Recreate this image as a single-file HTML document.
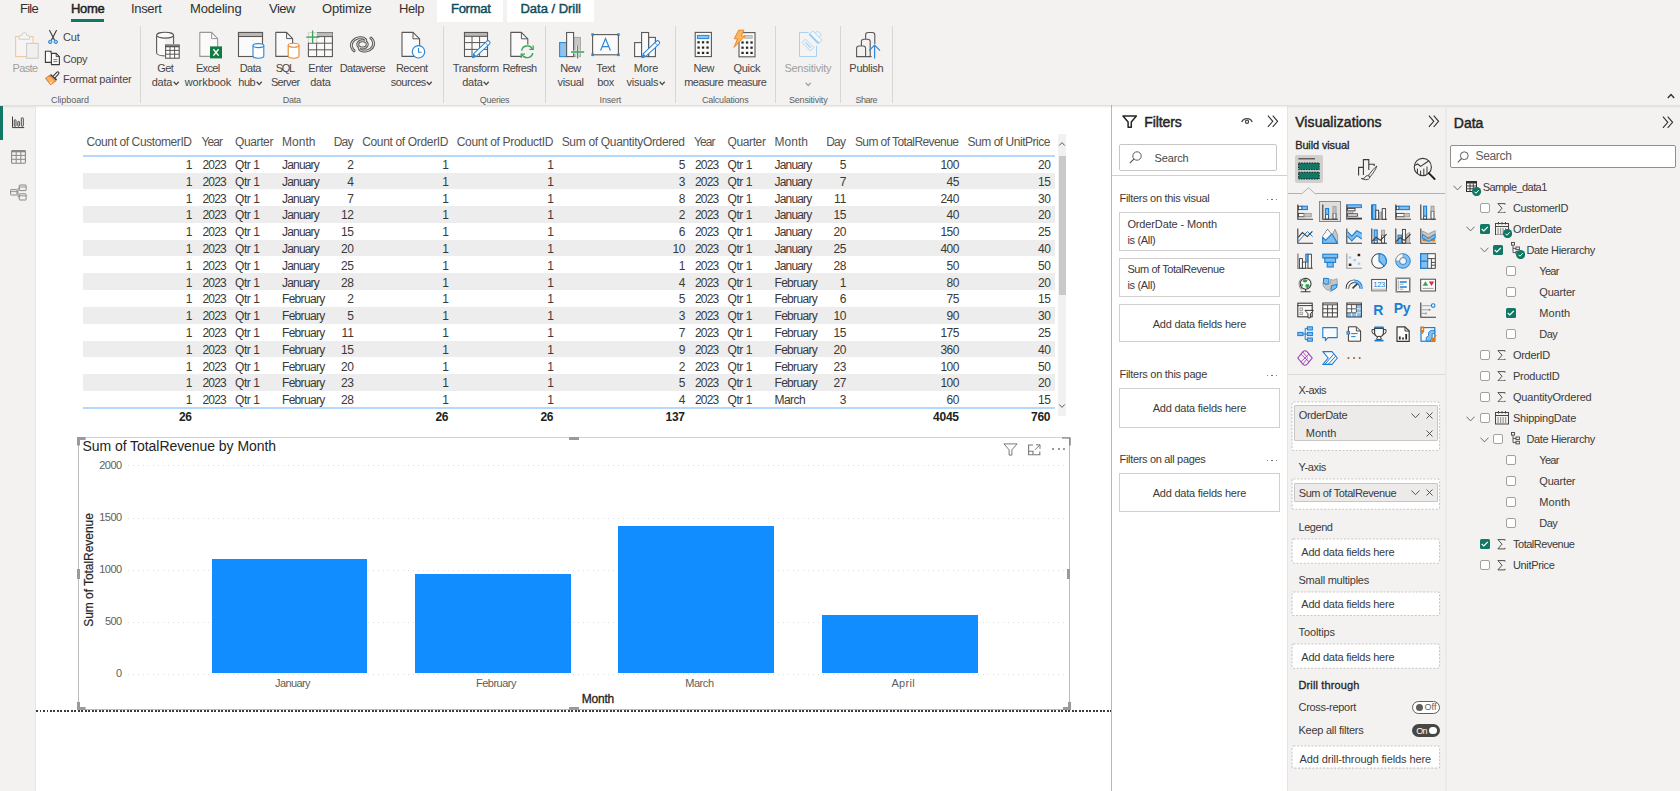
<!DOCTYPE html>
<html><head><meta charset="utf-8"><title>Power BI Desktop</title>
<style>
html,body{margin:0;padding:0}
body{width:1680px;height:791px;overflow:hidden;position:relative;background:#fff;font-family:"Liberation Sans", sans-serif;}
body>div,body>span,body>svg{position:absolute;display:block}
body>span{white-space:pre;line-height:1.149;}
</style></head><body>
<div style="left:0px;top:0px;width:1680px;height:105px;background:#f3f2f1;"></div>
<div style="left:0px;top:106px;width:35.4px;height:685px;background:#f3f2f1;"></div>
<div style="left:35px;top:106.6px;width:1px;height:685px;background:#e7e5e3;"></div>
<div style="left:0px;top:106px;width:3px;height:34px;background:#117865;"></div>
<div style="left:437px;top:0px;width:66px;height:22px;background:#fff;"></div>
<div style="left:507px;top:0px;width:87px;height:22px;background:#fff;"></div>
<span style="left:20.00px;top:1.89px;font-size:13px;color:#323130;letter-spacing:-0.738px;">File</span>
<span style="left:71.00px;top:1.89px;font-size:13px;color:#201f1e;-webkit-text-stroke:0.45px;letter-spacing:-0.297px;">Home</span>
<div style="left:71px;top:19px;width:33px;height:3px;background:#117865;"></div>
<span style="left:131.00px;top:1.89px;font-size:13px;color:#323130;letter-spacing:-0.336px;">Insert</span>
<span style="left:190.00px;top:1.89px;font-size:13px;color:#323130;letter-spacing:-0.158px;">Modeling</span>
<span style="left:269.00px;top:1.89px;font-size:13px;color:#323130;letter-spacing:-0.488px;">View</span>
<span style="left:322.00px;top:1.89px;font-size:13px;color:#323130;letter-spacing:-0.225px;">Optimize</span>
<span style="left:399.00px;top:1.89px;font-size:13px;color:#323130;letter-spacing:-0.438px;">Help</span>
<span style="left:451.00px;top:1.89px;font-size:13px;color:#0f4c5c;-webkit-text-stroke:0.45px;letter-spacing:-0.279px;">Format</span>
<span style="left:520.50px;top:1.89px;font-size:13px;color:#0f4c5c;-webkit-text-stroke:0.45px;letter-spacing:-0.016px;">Data / Drill</span>
<div style="left:140px;top:26px;width:1px;height:77px;background:#d8d6d4;"></div>
<div style="left:443px;top:26px;width:1px;height:77px;background:#d8d6d4;"></div>
<div style="left:545px;top:26px;width:1px;height:77px;background:#d8d6d4;"></div>
<div style="left:675px;top:26px;width:1px;height:77px;background:#d8d6d4;"></div>
<div style="left:775px;top:26px;width:1px;height:77px;background:#d8d6d4;"></div>
<div style="left:840px;top:26px;width:1px;height:77px;background:#d8d6d4;"></div>
<div style="left:892px;top:26px;width:1px;height:77px;background:#d8d6d4;"></div>
<svg style="left:1667px;top:93px;" width="8" height="6" viewBox="0 0 8 6" fill="none"><path d="M0.8 5 L4 1.6 L7.2 5" stroke="#323130" stroke-width="1.4"/></svg>
<span style="left:12.50px;top:62.18px;font-size:11px;color:#a19f9d;letter-spacing:-0.628px;">Paste</span>
<span style="left:63.00px;top:31.48px;font-size:11px;color:#484644;letter-spacing:-0.208px;">Cut</span>
<span style="left:63.00px;top:52.68px;font-size:11px;color:#484644;letter-spacing:-0.422px;">Copy</span>
<span style="left:63.00px;top:73.38px;font-size:11px;color:#484644;letter-spacing:-0.217px;">Format painter</span>
<span style="left:50.97px;top:94.78px;font-size:9px;color:#605e5c;letter-spacing:-0.059px;">Clipboard</span>
<span style="left:157.21px;top:62.38px;font-size:11px;color:#484644;letter-spacing:-0.578px;">Get</span>
<span style="left:151.63px;top:76.38px;font-size:11px;color:#484644;letter-spacing:-0.230px;">data</span>
<svg style="left:172.65px;top:81.3px;" width="7" height="5" viewBox="0 0 7 5" fill="none"><path d="M0.7 0.8 L3.2 3.6 L5.7 0.8" stroke="#484644" stroke-width="1.3"/></svg>
<span style="left:195.91px;top:62.38px;font-size:11px;color:#484644;letter-spacing:-0.681px;">Excel</span>
<span style="left:184.71px;top:76.38px;font-size:11px;color:#484644;letter-spacing:-0.072px;">workbook</span>
<span style="left:239.72px;top:62.38px;font-size:11px;color:#484644;letter-spacing:-0.562px;">Data</span>
<span style="left:238.27px;top:76.38px;font-size:11px;color:#484644;letter-spacing:-0.453px;">hub</span>
<svg style="left:255.9px;top:81.3px;" width="7" height="5" viewBox="0 0 7 5" fill="none"><path d="M0.7 0.8 L3.2 3.6 L5.7 0.8" stroke="#484644" stroke-width="1.3"/></svg>
<span style="left:275.83px;top:62.38px;font-size:11px;color:#484644;letter-spacing:-1.339px;">SQL</span>
<span style="left:270.92px;top:76.38px;font-size:11px;color:#484644;letter-spacing:-0.651px;">Server</span>
<span style="left:308.27px;top:62.38px;font-size:11px;color:#484644;letter-spacing:-0.459px;">Enter</span>
<span style="left:310.13px;top:76.38px;font-size:11px;color:#484644;letter-spacing:-0.230px;">data</span>
<span style="left:339.69px;top:62.38px;font-size:11px;color:#484644;letter-spacing:-0.516px;">Dataverse</span>
<span style="left:395.97px;top:62.38px;font-size:11px;color:#484644;letter-spacing:-0.560px;">Recent</span>
<span style="left:390.75px;top:76.38px;font-size:11px;color:#484644;letter-spacing:-0.504px;">sources</span>
<svg style="left:426.4px;top:81.3px;" width="7" height="5" viewBox="0 0 7 5" fill="none"><path d="M0.7 0.8 L3.2 3.6 L5.7 0.8" stroke="#484644" stroke-width="1.3"/></svg>
<span style="left:282.87px;top:94.78px;font-size:9px;color:#605e5c;letter-spacing:-0.254px;">Data</span>
<span style="left:452.79px;top:62.38px;font-size:11px;color:#484644;letter-spacing:-0.413px;">Transform</span>
<span style="left:462.13px;top:76.38px;font-size:11px;color:#484644;letter-spacing:-0.230px;">data</span>
<svg style="left:483.15px;top:81.3px;" width="7" height="5" viewBox="0 0 7 5" fill="none"><path d="M0.7 0.8 L3.2 3.6 L5.7 0.8" stroke="#484644" stroke-width="1.3"/></svg>
<span style="left:502.48px;top:62.38px;font-size:11px;color:#484644;letter-spacing:-0.647px;">Refresh</span>
<span style="left:479.81px;top:94.78px;font-size:9px;color:#605e5c;letter-spacing:-0.288px;">Queries</span>
<span style="left:560.30px;top:62.38px;font-size:11px;color:#484644;letter-spacing:-0.505px;">New</span>
<span style="left:557.62px;top:76.38px;font-size:11px;color:#484644;letter-spacing:-0.354px;">visual</span>
<span style="left:596.34px;top:62.38px;font-size:11px;color:#484644;letter-spacing:-0.422px;">Text</span>
<span style="left:597.34px;top:76.38px;font-size:11px;color:#484644;letter-spacing:-0.417px;">box</span>
<span style="left:633.68px;top:62.38px;font-size:11px;color:#484644;letter-spacing:-0.141px;">More</span>
<span style="left:626.60px;top:76.38px;font-size:11px;color:#484644;letter-spacing:-0.304px;">visuals</span>
<svg style="left:658.65px;top:81.3px;" width="7" height="5" viewBox="0 0 7 5" fill="none"><path d="M0.7 0.8 L3.2 3.6 L5.7 0.8" stroke="#484644" stroke-width="1.3"/></svg>
<span style="left:599.57px;top:94.78px;font-size:9px;color:#605e5c;letter-spacing:-0.169px;">Insert</span>
<span style="left:693.50px;top:62.38px;font-size:11px;color:#484644;letter-spacing:-0.505px;">New</span>
<span style="left:684.23px;top:76.38px;font-size:11px;color:#484644;letter-spacing:-0.542px;">measure</span>
<span style="left:733.39px;top:62.38px;font-size:11px;color:#484644;letter-spacing:-0.225px;">Quick</span>
<span style="left:727.23px;top:76.38px;font-size:11px;color:#484644;letter-spacing:-0.542px;">measure</span>
<span style="left:701.94px;top:94.78px;font-size:9px;color:#605e5c;letter-spacing:-0.211px;">Calculations</span>
<span style="left:784.38px;top:62.38px;font-size:11px;color:#a19f9d;letter-spacing:-0.230px;">Sensitivity</span>
<svg style="left:805px;top:81.5px;" width="7" height="5" viewBox="0 0 7 5" fill="none"><path d="M0.7 0.8 L3.2 3.6 L5.7 0.8" stroke="#a19f9d" stroke-width="1.3"/></svg>
<span style="left:788.96px;top:94.78px;font-size:9px;color:#605e5c;letter-spacing:-0.183px;">Sensitivity</span>
<span style="left:849.35px;top:62.38px;font-size:11px;color:#484644;letter-spacing:-0.297px;">Publish</span>
<span style="left:855.40px;top:94.78px;font-size:9px;color:#605e5c;letter-spacing:-0.506px;">Share</span>
<svg style="left:13px;top:31px;" width="28" height="29" viewBox="0 0 28 29" fill="none"><rect x="2.6" y="5.6" width="17.4" height="20" fill="#f6f5f4" stroke="#f3c89c" stroke-width="1.1"/><path d="M6 8.2V5.6Q6 4.6 7 4.6H8.6Q9 1.6 11.3 1.6Q13.6 1.6 14 4.6H15.6Q16.6 4.6 16.6 5.6V8.2Z" fill="#f6f5f4" stroke="#cfcdcb" stroke-width="1"/><rect x="13.6" y="12.4" width="11.6" height="14.8" fill="#f1f0ef" stroke="#cfcdcb" stroke-width="1.1"/></svg>
<svg style="left:47px;top:29px;" width="12" height="16" viewBox="0 0 12 16" fill="none"><path d="M2.6 1.4L7.6 11.2M9.4 1.4L4.4 11.2" stroke="#3b3a39" stroke-width="1.1" stroke-linecap="round"/><circle cx="3.2" cy="12.9" r="1.7" fill="#9ccbf0" stroke="#2b88d8" stroke-width="1"/><circle cx="8.8" cy="12.9" r="1.7" fill="#9ccbf0" stroke="#2b88d8" stroke-width="1"/></svg>
<svg style="left:44px;top:50px;" width="17" height="16" viewBox="0 0 17 16" fill="none"><path d="M7.4 12.4H1.4V1.2H7V3.2" stroke="#3b3a39" stroke-width="1.1" fill="#fafafa"/><path d="M7.4 3.4H12.2L15.4 6.6V14.6H7.4Z" fill="#fafafa" stroke="#3b3a39" stroke-width="1.1" stroke-linejoin="round"/><path d="M12.2 3.4V6.6H15.4" stroke="#3b3a39" stroke-width="0.9"/><path d="M9.4 9.6H13.4M9.4 11.6H13.4" stroke="#605e5c" stroke-width="0.8"/></svg>
<svg style="left:44px;top:70px;" width="17" height="16" viewBox="0 0 17 16" fill="none"><path d="M9.2 6.2L13 2.2Q13.8 1.4 14.6 2.2Q15.4 3 14.6 3.8L11 7.8" stroke="#3b3a39" stroke-width="1.1" fill="#fafafa"/><path d="M6.4 4.6L12.6 10.2" stroke="#3b3a39" stroke-width="1.6"/><path d="M5.6 5.4L11.6 11L6.6 14.6Q3.8 11 1.6 8.4Z" fill="#f7b36a" stroke="#e8872e" stroke-width="1.1" stroke-linejoin="round"/><path d="M5.4 12.6L8.8 11.4L6.6 13.9Z" fill="#fbe3c7"/></svg>
<svg style="left:155px;top:31px;" width="26" height="29" viewBox="0 0 26 29" fill="none"><path d="M1.6 4.2V22Q1.6 25 10 25V4.2" fill="#fafafa"/><path d="M1.6 4.2V22Q2 24.6 9.6 24.9M18.6 4.2V13" stroke="#5a5856" stroke-width="1.1"/><ellipse cx="10.1" cy="4.2" rx="8.5" ry="2.9" fill="#fafafa" stroke="#5a5856" stroke-width="1.1"/><rect x="10.6" y="14" width="13.6" height="13.2" fill="#fff" stroke="#5a5856" stroke-width="1.1"/><path d="M10.6 15.4H24.2" stroke="#5a5856" stroke-width="1.8"/><path d="M10.6 19.4H24.2M10.6 23.2H24.2M15 16V27.2M19.6 16V27.2" stroke="#5a5856" stroke-width="1"/></svg>
<svg style="left:198px;top:31px;" width="26" height="29" viewBox="0 0 26 29" fill="none"><path d="M1.8 1.4H13.6L19.6 7.6V25.4H1.8Z" fill="#fafafa" stroke="#9a9896" stroke-width="1.1" stroke-linejoin="round"/><path d="M13.6 1.4V7.6H19.6" stroke="#9a9896" stroke-width="1"/><rect x="12" y="15.4" width="12" height="12" fill="#107c41"/><path d="M15.4 18.2L20.6 24.6M20.6 18.2L15.4 24.6" stroke="#fff" stroke-width="1.5"/></svg>
<svg style="left:237px;top:31px;" width="29" height="29" viewBox="0 0 29 29" fill="none"><rect x="1.5" y="1.5" width="24" height="24" fill="#fafafa" stroke="#5a5856" stroke-width="1.1"/><rect x="1.5" y="1.5" width="24" height="4" fill="#bdbbb9" stroke="#5a5856" stroke-width="1.1"/><path d="M16 14.6V25Q16 27.2 21.4 27.2Q26.8 27.2 26.8 25V14.6Z" fill="#fff"/><path d="M16 14.6V25Q16 27.2 21.4 27.2Q26.8 27.2 26.8 25V14.6" stroke="#2b88d8" stroke-width="1.1"/><ellipse cx="21.4" cy="14.6" rx="5.4" ry="2" fill="#fff" stroke="#2b88d8" stroke-width="1.1"/></svg>
<svg style="left:274px;top:31px;" width="27" height="29" viewBox="0 0 27 29" fill="none"><path d="M1.8 1.4H12.6L18.6 7.6V25.4H1.8Z" fill="#fafafa" stroke="#5a5856" stroke-width="1.1" stroke-linejoin="round"/><path d="M12.6 1.4V7.6H18.6" stroke="#5a5856" stroke-width="1"/><path d="M14.2 14.2V25Q14.2 27.2 19.6 27.2Q25 27.2 25 25V14.2Z" fill="#fff"/><path d="M14.2 14.2V25Q14.2 27.2 19.6 27.2Q25 27.2 25 25V14.2" stroke="#e8872e" stroke-width="1.1"/><ellipse cx="19.6" cy="14.2" rx="5.4" ry="2" fill="#fff" stroke="#e8872e" stroke-width="1.1"/></svg>
<svg style="left:305px;top:29px;" width="29" height="30" viewBox="0 0 29 30" fill="none"><rect x="3.4" y="3.6" width="24" height="24" fill="#fafafa" stroke="#5a5856" stroke-width="1.1"/><rect x="10.6" y="3.6" width="16.8" height="3.8" fill="#bdbbb9"/><path d="M3.4 7.6H27.4M3.4 14.2H27.4M3.4 20.8H27.4M11.6 7.6V27.6M19.6 7.6V27.6" stroke="#5a5856" stroke-width="1"/><rect x="0" y="0" width="12" height="13.6" fill="#f3f2f1" opacity="0.8"/><path d="M7.6 1.6V14.6M1.2 8.2H14.4" stroke="#3aa35a" stroke-width="1.3"/></svg>
<svg style="left:348px;top:33px;" width="29" height="23" viewBox="0 0 29 23" fill="none"><path d="M11.7 14.3L12.1 14.5L12.5 14.7L13.0 14.8L13.5 14.9L13.9 15.0L14.4 15.0L14.9 15.0L15.4 14.9L15.9 14.8L16.3 14.7L16.8 14.6L17.2 14.4L17.6 14.2L17.9 13.9L18.2 13.6L18.5 13.3L18.8 13.0L18.9 12.7L19.1 12.3L19.2 12.0L19.2 11.6L19.2 11.2L19.2 10.9L19.1 10.5L19.0 10.2L18.8 9.8L18.5 9.5L18.3 9.2L17.9 8.9L17.6 8.7L17.7 7.9L17.7 7.0L17.3 6.4L16.7 5.9L16.0 5.5L15.3 5.2L14.4 5.0L13.5 4.8L12.6 4.8L11.7 4.8L10.7 4.9L9.8 5.1L8.9 5.4L8.0 5.8L7.1 6.2L6.4 6.8L5.7 7.4L5.0 8.0L4.5 8.7L4.1 9.5L3.7 10.3L3.5 11.1L3.4 12.0L3.4 12.9L3.6 13.7L3.9 14.6L4.2 15.4L4.7 16.3L5.4 17.0L6.1 17.8" stroke="#5a5856" stroke-width="2.9" stroke-linecap="round" stroke-linejoin="round"/><path d="M17.3 8.5L16.9 8.3L16.5 8.1L16.0 8.0L15.5 7.9L15.1 7.8L14.6 7.8L14.1 7.8L13.6 7.9L13.1 8.0L12.7 8.1L12.2 8.2L11.8 8.4L11.4 8.6L11.1 8.9L10.8 9.2L10.5 9.5L10.2 9.8L10.1 10.1L9.9 10.5L9.8 10.8L9.8 11.2L9.8 11.6L9.8 11.9L9.9 12.3L10.0 12.6L10.2 13.0L10.5 13.3L10.7 13.6L11.1 13.9L11.4 14.1L11.3 14.9L11.3 15.8L11.7 16.4L12.3 16.9L13.0 17.3L13.7 17.6L14.6 17.8L15.5 18.0L16.4 18.0L17.3 18.0L18.3 17.9L19.2 17.7L20.1 17.4L21.0 17.0L21.9 16.6L22.6 16.0L23.3 15.4L24.0 14.8L24.5 14.1L24.9 13.3L25.3 12.5L25.5 11.7L25.6 10.8L25.6 9.9L25.4 9.1L25.1 8.2L24.8 7.4L24.3 6.5L23.6 5.8L22.9 5.0" stroke="#5a5856" stroke-width="2.9" stroke-linecap="round" stroke-linejoin="round"/><path d="M11.7 14.3L12.1 14.5L12.5 14.7L13.0 14.8L13.5 14.9L13.9 15.0L14.4 15.0L14.9 15.0L15.4 14.9L15.9 14.8L16.3 14.7L16.8 14.6L17.2 14.4L17.6 14.2L17.9 13.9L18.2 13.6L18.5 13.3L18.8 13.0L18.9 12.7L19.1 12.3L19.2 12.0L19.2 11.6L19.2 11.2L19.2 10.9L19.1 10.5L19.0 10.2L18.8 9.8L18.5 9.5L18.3 9.2L17.9 8.9L17.6 8.7L17.7 7.9L17.7 7.0L17.3 6.4L16.7 5.9L16.0 5.5L15.3 5.2L14.4 5.0L13.5 4.8L12.6 4.8L11.7 4.8L10.7 4.9L9.8 5.1L8.9 5.4L8.0 5.8L7.1 6.2L6.4 6.8L5.7 7.4L5.0 8.0L4.5 8.7L4.1 9.5L3.7 10.3L3.5 11.1L3.4 12.0L3.4 12.9L3.6 13.7L3.9 14.6L4.2 15.4L4.7 16.3L5.4 17.0L6.1 17.8" stroke="#f6f5f4" stroke-width="1.0" stroke-linecap="round" stroke-linejoin="round"/><path d="M17.3 8.5L16.9 8.3L16.5 8.1L16.0 8.0L15.5 7.9L15.1 7.8L14.6 7.8L14.1 7.8L13.6 7.9L13.1 8.0L12.7 8.1L12.2 8.2L11.8 8.4L11.4 8.6L11.1 8.9L10.8 9.2L10.5 9.5L10.2 9.8L10.1 10.1L9.9 10.5L9.8 10.8L9.8 11.2L9.8 11.6L9.8 11.9L9.9 12.3L10.0 12.6L10.2 13.0L10.5 13.3L10.7 13.6L11.1 13.9L11.4 14.1L11.3 14.9L11.3 15.8L11.7 16.4L12.3 16.9L13.0 17.3L13.7 17.6L14.6 17.8L15.5 18.0L16.4 18.0L17.3 18.0L18.3 17.9L19.2 17.7L20.1 17.4L21.0 17.0L21.9 16.6L22.6 16.0L23.3 15.4L24.0 14.8L24.5 14.1L24.9 13.3L25.3 12.5L25.5 11.7L25.6 10.8L25.6 9.9L25.4 9.1L25.1 8.2L24.8 7.4L24.3 6.5L23.6 5.8L22.9 5.0" stroke="#f6f5f4" stroke-width="1.0" stroke-linecap="round" stroke-linejoin="round"/></svg>
<svg style="left:400px;top:31px;" width="28" height="29" viewBox="0 0 28 29" fill="none"><path d="M2 1.4H13L19.6 7.8V25.4H2Z" fill="#fafafa" stroke="#5a5856" stroke-width="1.1" stroke-linejoin="round"/><path d="M13 1.4V7.8H19.6" stroke="#5a5856" stroke-width="1"/><circle cx="18.5" cy="20.8" r="6.2" fill="#fff" stroke="#2b88d8" stroke-width="1.2"/><path d="M18.5 17V21.2H21.6" stroke="#2b88d8" stroke-width="1.1"/></svg>
<svg style="left:463px;top:31px;" width="30" height="29" viewBox="0 0 30 29" fill="none"><rect x="1.5" y="1.5" width="23" height="24" fill="#fafafa" stroke="#5a5856" stroke-width="1.1"/><rect x="1.5" y="1.5" width="23" height="3.8" fill="#bdbbb9" stroke="#5a5856" stroke-width="1.1"/><path d="M1.5 11.6H24.5M1.5 18.4H24.5M9 5.3V25.5M16.6 5.3V25.5" stroke="#5a5856" stroke-width="1"/><path d="M23.6 10.4Q25 9 26.4 10.4Q27.8 11.8 26.4 13.2L13.4 25.2L9.6 26.8L10.8 22.6Z" fill="#fff" stroke="#2b88d8" stroke-width="1.1" stroke-linejoin="round"/><path d="M10.8 22.6L13.4 25.2L9.6 26.8Z" fill="#2b88d8"/><path d="M22.2 11.6L25 14.4" stroke="#2b88d8" stroke-width="0.9"/></svg>
<svg style="left:509px;top:31px;" width="27" height="29" viewBox="0 0 27 29" fill="none"><path d="M1.8 1.4H12.4L18.8 7.8V25.4H1.8Z" fill="#fafafa" stroke="#5a5856" stroke-width="1.1" stroke-linejoin="round"/><path d="M12.4 1.4V7.8H18.8" stroke="#5a5856" stroke-width="1"/><circle cx="18.2" cy="20.8" r="7.4" fill="#f3f2f1"/><path d="M12.6 19.6A5.8 5.8 0 0 1 23.4 18M23.8 22A5.8 5.8 0 0 1 13 23.6" stroke="#3aa35a" stroke-width="1.3"/><path d="M24.2 14.6V18.4H20.4M12.2 27V23.2H16" stroke="#3aa35a" stroke-width="1.3"/></svg>
<svg style="left:558px;top:31px;" width="28" height="29" viewBox="0 0 28 29" fill="none"><rect x="1.6" y="11.6" width="7" height="14" fill="#8cc3ef" stroke="#2b88d8" stroke-width="1.1"/><rect x="15.6" y="6.4" width="6.8" height="19.2" fill="#c8c6c4" stroke="#a8a6a4" stroke-width="1"/><rect x="8.6" y="1.5" width="7" height="24.1" fill="#fafafa" stroke="#5a5856" stroke-width="1.1"/><path d="M19.6 14.4V27.6M13 21H26.2" stroke="#f3f2f1" stroke-width="3.2" opacity="0.75"/><path d="M19.6 14.4V27.6M13 21H26.2" stroke="#3aa35a" stroke-width="1.3"/></svg>
<svg style="left:590px;top:32px;" width="31" height="25" viewBox="0 0 31 25" fill="none"><rect x="2.6" y="2.6" width="25.8" height="20.2" fill="#fafafa" stroke="#5a5856" stroke-width="1.1"/><rect x="1.3" y="1.3" width="2.6" height="2.6" fill="#2b88d8"/><rect x="1.3" y="21.5" width="2.6" height="2.6" fill="#2b88d8"/><rect x="27.1" y="1.3" width="2.6" height="2.6" fill="#2b88d8"/><rect x="27.1" y="21.5" width="2.6" height="2.6" fill="#2b88d8"/><path d="M10.6 18.6L15.5 6.6L20.4 18.6M12.2 14.6H18.8" stroke="#2b88d8" stroke-width="1.2" stroke-linejoin="miter"/></svg>
<svg style="left:633px;top:31px;" width="30" height="29" viewBox="0 0 30 29" fill="none"><rect x="1.6" y="11.6" width="7" height="14" fill="#fafafa" stroke="#5a5856" stroke-width="1.1"/><rect x="15.6" y="6.4" width="6.8" height="19.2" fill="#fafafa" stroke="#5a5856" stroke-width="1.1"/><rect x="8.6" y="1.5" width="7" height="24.1" fill="#fafafa" stroke="#5a5856" stroke-width="1.1"/><path d="M23.2 10.4Q24.6 9 26 10.4Q27.4 11.8 26 13.2L13 25.2L9.2 26.8L10.4 22.6Z" fill="#fff" stroke="#2b88d8" stroke-width="1.1" stroke-linejoin="round"/><path d="M10.4 22.6L13 25.2L9.2 26.8Z" fill="#2b88d8"/><path d="M21.8 11.6L24.6 14.4" stroke="#2b88d8" stroke-width="0.9"/></svg>
<svg style="left:694px;top:31px;" width="19" height="27" viewBox="0 0 19 27" fill="none"><rect x="1.2" y="1.4" width="16.2" height="24.2" fill="#fafafa" stroke="#5a5856" stroke-width="1.1"/><rect x="3.4" y="4.4" width="11.4" height="3.2" fill="#8cc3ef" stroke="#2b88d8" stroke-width="1"/><rect x="3.4" y="10.2" width="2.3" height="2.2" fill="#252423"/><rect x="3.4" y="15.5" width="2.3" height="2.2" fill="#252423"/><rect x="3.4" y="20.8" width="2.3" height="2.2" fill="#252423"/><rect x="7.9" y="10.2" width="2.3" height="2.2" fill="#252423"/><rect x="7.9" y="15.5" width="2.3" height="2.2" fill="#252423"/><rect x="7.9" y="20.8" width="2.3" height="2.2" fill="#252423"/><rect x="12.4" y="10.2" width="2.3" height="2.2" fill="#252423"/><rect x="12.4" y="15.5" width="2.3" height="2.2" fill="#252423"/><rect x="12.4" y="20.8" width="2.3" height="2.2" fill="#252423"/></svg>
<svg style="left:732px;top:29px;" width="25" height="29" viewBox="0 0 25 29" fill="none"><rect x="7" y="3.6" width="16" height="24.2" fill="#fafafa" stroke="#5a5856" stroke-width="1.1"/><rect x="12.6" y="6.6" width="7.6" height="2.6" fill="#d2d0ce" stroke="#a8a6a4" stroke-width="0.8"/><rect x="9.4" y="12.4" width="2.3" height="2.2" fill="#252423"/><rect x="9.4" y="17.6" width="2.3" height="2.2" fill="#252423"/><rect x="9.4" y="22.8" width="2.3" height="2.2" fill="#252423"/><rect x="13.9" y="12.4" width="2.3" height="2.2" fill="#252423"/><rect x="13.9" y="17.6" width="2.3" height="2.2" fill="#252423"/><rect x="13.9" y="22.8" width="2.3" height="2.2" fill="#252423"/><rect x="18.4" y="12.4" width="2.3" height="2.2" fill="#252423"/><rect x="18.4" y="17.6" width="2.3" height="2.2" fill="#252423"/><rect x="18.4" y="22.8" width="2.3" height="2.2" fill="#252423"/><path d="M6.6 1.2H12L9.2 7H13.2L2 18.4L5.6 9.8H2.2Z" fill="#f9b65e" stroke="#e8872e" stroke-width="1" stroke-linejoin="round"/></svg>
<svg style="left:797px;top:29px;" width="29" height="30" viewBox="0 0 29 30" fill="none"><path d="M11.6 3.5H2.5V27.5H19.5V16.8" fill="#f5f4f3" stroke="#a9d2f1" stroke-width="1"/><g transform="rotate(45 11 16)"><rect x="5.05" y="13.55" width="11.9" height="4.9" fill="#f5f4f3" stroke="#a9d2f1" stroke-width="0.9"/><path d="M7.2 16H14.8" stroke="#a9d2f1" stroke-width="1.3"/></g><g transform="rotate(45 18.5 8.4)"><rect x="15.4" y="2.4" width="5.6" height="3.6" fill="#f5f4f3" stroke="#a9d2f1" stroke-width="0.9"/><rect x="12" y="5.8" width="13" height="5.2" fill="#f8f8f8" stroke="#a9d2f1" stroke-width="0.9"/><rect x="12" y="9.4" width="13" height="1.8" fill="#9ccbee"/></g></svg>
<svg style="left:855px;top:31px;" width="27" height="29" viewBox="0 0 27 29" fill="none"><path d="M10.6 25.6V4Q10.6 1.5 13 1.5H17.4Q19.8 1.5 19.8 4V13" stroke="#5a5856" stroke-width="1.1"/><path d="M6.4 25.6V10.6Q6.4 8.2 8.8 8.2H12.8Q15.2 8.2 15.2 10.6V25.6" fill="#f3f2f1" stroke="#5a5856" stroke-width="1.1"/><path d="M1.6 25.6V17.4Q1.6 15 4 15H8.2Q10.6 15 10.6 17.4V25.6ZM1.6 25.6H16.6" fill="#f3f2f1" stroke="#5a5856" stroke-width="1.1"/><path d="M19.6 27.6V14.4M14.2 19.6L19.6 14.2L25 19.6" stroke="#2b88d8" stroke-width="1.2"/></svg>
<svg style="left:11px;top:115px;" width="14" height="14" viewBox="0 0 14 14" fill="none"><path d="M1.5 1.6V12.6H13.2" stroke="#3b3a39" stroke-width="1"/><rect x="3.3" y="4.8" width="1.7" height="6.4" rx="0.5" stroke="#3b3a39" stroke-width="0.9"/><rect x="6.8" y="6.4" width="1.6" height="4.8" rx="0.5" stroke="#3b3a39" stroke-width="0.9"/><rect x="10.3" y="2.8" width="2" height="8.4" rx="0.6" stroke="#3b3a39" stroke-width="0.9"/></svg>
<svg style="left:11px;top:150px;" width="15" height="14" viewBox="0 0 15 14" fill="none"><rect x="0.6" y="0.6" width="13.8" height="12.6" rx="0.6" stroke="#8a8886" stroke-width="1.1"/><path d="M0.6 1.6H14.4" stroke="#8a8886" stroke-width="1.4"/><path d="M0.6 5.4H14.4M0.6 9.3H14.4M5.2 1.6V13.2M9.8 1.6V13.2" stroke="#8a8886" stroke-width="1"/></svg>
<svg style="left:10px;top:184px;" width="17" height="17" viewBox="0 0 17 17" fill="none"><rect x="9.3" y="1" width="6.8" height="5.6" rx="0.5" stroke="#8a8886" stroke-width="1"/><path d="M9.3 3H16.1" stroke="#8a8886" stroke-width="0.9"/><rect x="0.6" y="5.6" width="6.4" height="5.4" rx="0.5" stroke="#8a8886" stroke-width="1"/><path d="M0.6 7.6H7" stroke="#8a8886" stroke-width="0.9"/><rect x="9.3" y="9.8" width="6.8" height="6.2" rx="0.5" stroke="#8a8886" stroke-width="1"/><path d="M9.3 11.8H16.1" stroke="#8a8886" stroke-width="0.9"/><path d="M7 8.2H8M9.3 4.4H8V12.8H9.3" stroke="#8a8886" stroke-width="0.9"/></svg>
<span style="left:86.59px;top:135.74px;font-size:12px;color:#555351;letter-spacing:-0.406px;">Count of CustomerID</span>
<span style="left:201.50px;top:135.74px;font-size:12px;color:#555351;letter-spacing:-0.938px;">Year</span>
<span style="left:235.00px;top:135.74px;font-size:12px;color:#555351;letter-spacing:-0.384px;">Quarter</span>
<span style="left:282.00px;top:135.74px;font-size:12px;color:#555351;letter-spacing:0.028px;">Month</span>
<span style="left:333.72px;top:135.74px;font-size:12px;color:#555351;letter-spacing:-0.781px;">Day</span>
<span style="left:362.16px;top:135.74px;font-size:12px;color:#555351;letter-spacing:-0.336px;">Count of OrderID</span>
<span style="left:456.69px;top:135.74px;font-size:12px;color:#555351;letter-spacing:-0.309px;">Count of ProductID</span>
<span style="left:561.68px;top:135.74px;font-size:12px;color:#555351;letter-spacing:-0.321px;">Sum of QuantityOrdered</span>
<span style="left:694.00px;top:135.74px;font-size:12px;color:#555351;letter-spacing:-0.938px;">Year</span>
<span style="left:727.50px;top:135.74px;font-size:12px;color:#555351;letter-spacing:-0.384px;">Quarter</span>
<span style="left:774.50px;top:135.74px;font-size:12px;color:#555351;letter-spacing:0.028px;">Month</span>
<span style="left:826.22px;top:135.74px;font-size:12px;color:#555351;letter-spacing:-0.781px;">Day</span>
<span style="left:854.92px;top:135.74px;font-size:12px;color:#555351;letter-spacing:-0.580px;">Sum of TotalRevenue</span>
<span style="left:967.53px;top:135.74px;font-size:12px;color:#555351;letter-spacing:-0.471px;">Sum of UnitPrice</span>
<div style="left:83px;top:155px;width:972px;height:1.6px;background:#b4d9fc;"></div>
<span style="left:185.81px;top:158.94px;font-size:12px;color:#3a3938;letter-spacing:-0.487px;">1</span>
<span style="left:202.50px;top:158.94px;font-size:12px;color:#3a3938;letter-spacing:-0.801px;">2023</span>
<span style="left:235.00px;top:158.94px;font-size:12px;color:#3a3938;letter-spacing:-0.434px;">Qtr 1</span>
<span style="left:282.00px;top:158.94px;font-size:12px;color:#3a3938;letter-spacing:-0.815px;">January</span>
<span style="left:347.31px;top:158.94px;font-size:12px;color:#3a3938;letter-spacing:-0.487px;">2</span>
<span style="left:442.31px;top:158.94px;font-size:12px;color:#3a3938;letter-spacing:-0.487px;">1</span>
<span style="left:547.31px;top:158.94px;font-size:12px;color:#3a3938;letter-spacing:-0.487px;">1</span>
<span style="left:678.81px;top:158.94px;font-size:12px;color:#3a3938;letter-spacing:-0.487px;">5</span>
<span style="left:695.00px;top:158.94px;font-size:12px;color:#3a3938;letter-spacing:-0.801px;">2023</span>
<span style="left:727.50px;top:158.94px;font-size:12px;color:#3a3938;letter-spacing:-0.434px;">Qtr 1</span>
<span style="left:774.50px;top:158.94px;font-size:12px;color:#3a3938;letter-spacing:-0.815px;">January</span>
<span style="left:839.81px;top:158.94px;font-size:12px;color:#3a3938;letter-spacing:-0.487px;">5</span>
<span style="left:940.42px;top:158.94px;font-size:12px;color:#3a3938;letter-spacing:-0.477px;">100</span>
<span style="left:1038.12px;top:158.94px;font-size:12px;color:#3a3938;letter-spacing:-0.480px;">20</span>
<div style="left:83px;top:172.5px;width:972px;height:16.8px;background:#ededed;"></div>
<span style="left:185.81px;top:175.74px;font-size:12px;color:#3a3938;letter-spacing:-0.487px;">1</span>
<span style="left:202.50px;top:175.74px;font-size:12px;color:#3a3938;letter-spacing:-0.801px;">2023</span>
<span style="left:235.00px;top:175.74px;font-size:12px;color:#3a3938;letter-spacing:-0.434px;">Qtr 1</span>
<span style="left:282.00px;top:175.74px;font-size:12px;color:#3a3938;letter-spacing:-0.815px;">January</span>
<span style="left:347.31px;top:175.74px;font-size:12px;color:#3a3938;letter-spacing:-0.487px;">4</span>
<span style="left:442.31px;top:175.74px;font-size:12px;color:#3a3938;letter-spacing:-0.487px;">1</span>
<span style="left:547.31px;top:175.74px;font-size:12px;color:#3a3938;letter-spacing:-0.487px;">1</span>
<span style="left:678.81px;top:175.74px;font-size:12px;color:#3a3938;letter-spacing:-0.487px;">3</span>
<span style="left:695.00px;top:175.74px;font-size:12px;color:#3a3938;letter-spacing:-0.801px;">2023</span>
<span style="left:727.50px;top:175.74px;font-size:12px;color:#3a3938;letter-spacing:-0.434px;">Qtr 1</span>
<span style="left:774.50px;top:175.74px;font-size:12px;color:#3a3938;letter-spacing:-0.815px;">January</span>
<span style="left:839.81px;top:175.74px;font-size:12px;color:#3a3938;letter-spacing:-0.487px;">7</span>
<span style="left:946.62px;top:175.74px;font-size:12px;color:#3a3938;letter-spacing:-0.480px;">45</span>
<span style="left:1038.12px;top:175.74px;font-size:12px;color:#3a3938;letter-spacing:-0.480px;">15</span>
<span style="left:185.81px;top:192.54px;font-size:12px;color:#3a3938;letter-spacing:-0.487px;">1</span>
<span style="left:202.50px;top:192.54px;font-size:12px;color:#3a3938;letter-spacing:-0.801px;">2023</span>
<span style="left:235.00px;top:192.54px;font-size:12px;color:#3a3938;letter-spacing:-0.434px;">Qtr 1</span>
<span style="left:282.00px;top:192.54px;font-size:12px;color:#3a3938;letter-spacing:-0.815px;">January</span>
<span style="left:347.31px;top:192.54px;font-size:12px;color:#3a3938;letter-spacing:-0.487px;">7</span>
<span style="left:442.31px;top:192.54px;font-size:12px;color:#3a3938;letter-spacing:-0.487px;">1</span>
<span style="left:547.31px;top:192.54px;font-size:12px;color:#3a3938;letter-spacing:-0.487px;">1</span>
<span style="left:678.81px;top:192.54px;font-size:12px;color:#3a3938;letter-spacing:-0.487px;">8</span>
<span style="left:695.00px;top:192.54px;font-size:12px;color:#3a3938;letter-spacing:-0.801px;">2023</span>
<span style="left:727.50px;top:192.54px;font-size:12px;color:#3a3938;letter-spacing:-0.434px;">Qtr 1</span>
<span style="left:774.50px;top:192.54px;font-size:12px;color:#3a3938;letter-spacing:-0.815px;">January</span>
<span style="left:834.07px;top:192.54px;font-size:12px;color:#3a3938;letter-spacing:-0.034px;">11</span>
<span style="left:940.42px;top:192.54px;font-size:12px;color:#3a3938;letter-spacing:-0.477px;">240</span>
<span style="left:1038.12px;top:192.54px;font-size:12px;color:#3a3938;letter-spacing:-0.480px;">30</span>
<div style="left:83px;top:206.1px;width:972px;height:16.8px;background:#ededed;"></div>
<span style="left:185.81px;top:209.34px;font-size:12px;color:#3a3938;letter-spacing:-0.487px;">1</span>
<span style="left:202.50px;top:209.34px;font-size:12px;color:#3a3938;letter-spacing:-0.801px;">2023</span>
<span style="left:235.00px;top:209.34px;font-size:12px;color:#3a3938;letter-spacing:-0.434px;">Qtr 1</span>
<span style="left:282.00px;top:209.34px;font-size:12px;color:#3a3938;letter-spacing:-0.815px;">January</span>
<span style="left:341.12px;top:209.34px;font-size:12px;color:#3a3938;letter-spacing:-0.480px;">12</span>
<span style="left:442.31px;top:209.34px;font-size:12px;color:#3a3938;letter-spacing:-0.487px;">1</span>
<span style="left:547.31px;top:209.34px;font-size:12px;color:#3a3938;letter-spacing:-0.487px;">1</span>
<span style="left:678.81px;top:209.34px;font-size:12px;color:#3a3938;letter-spacing:-0.487px;">2</span>
<span style="left:695.00px;top:209.34px;font-size:12px;color:#3a3938;letter-spacing:-0.801px;">2023</span>
<span style="left:727.50px;top:209.34px;font-size:12px;color:#3a3938;letter-spacing:-0.434px;">Qtr 1</span>
<span style="left:774.50px;top:209.34px;font-size:12px;color:#3a3938;letter-spacing:-0.815px;">January</span>
<span style="left:833.62px;top:209.34px;font-size:12px;color:#3a3938;letter-spacing:-0.480px;">15</span>
<span style="left:946.62px;top:209.34px;font-size:12px;color:#3a3938;letter-spacing:-0.480px;">40</span>
<span style="left:1038.12px;top:209.34px;font-size:12px;color:#3a3938;letter-spacing:-0.480px;">20</span>
<span style="left:185.81px;top:226.14px;font-size:12px;color:#3a3938;letter-spacing:-0.487px;">1</span>
<span style="left:202.50px;top:226.14px;font-size:12px;color:#3a3938;letter-spacing:-0.801px;">2023</span>
<span style="left:235.00px;top:226.14px;font-size:12px;color:#3a3938;letter-spacing:-0.434px;">Qtr 1</span>
<span style="left:282.00px;top:226.14px;font-size:12px;color:#3a3938;letter-spacing:-0.815px;">January</span>
<span style="left:341.12px;top:226.14px;font-size:12px;color:#3a3938;letter-spacing:-0.480px;">15</span>
<span style="left:442.31px;top:226.14px;font-size:12px;color:#3a3938;letter-spacing:-0.487px;">1</span>
<span style="left:547.31px;top:226.14px;font-size:12px;color:#3a3938;letter-spacing:-0.487px;">1</span>
<span style="left:678.81px;top:226.14px;font-size:12px;color:#3a3938;letter-spacing:-0.487px;">6</span>
<span style="left:695.00px;top:226.14px;font-size:12px;color:#3a3938;letter-spacing:-0.801px;">2023</span>
<span style="left:727.50px;top:226.14px;font-size:12px;color:#3a3938;letter-spacing:-0.434px;">Qtr 1</span>
<span style="left:774.50px;top:226.14px;font-size:12px;color:#3a3938;letter-spacing:-0.815px;">January</span>
<span style="left:833.62px;top:226.14px;font-size:12px;color:#3a3938;letter-spacing:-0.480px;">20</span>
<span style="left:940.42px;top:226.14px;font-size:12px;color:#3a3938;letter-spacing:-0.477px;">150</span>
<span style="left:1038.12px;top:226.14px;font-size:12px;color:#3a3938;letter-spacing:-0.480px;">25</span>
<div style="left:83px;top:239.7px;width:972px;height:16.8px;background:#ededed;"></div>
<span style="left:185.81px;top:242.94px;font-size:12px;color:#3a3938;letter-spacing:-0.487px;">1</span>
<span style="left:202.50px;top:242.94px;font-size:12px;color:#3a3938;letter-spacing:-0.801px;">2023</span>
<span style="left:235.00px;top:242.94px;font-size:12px;color:#3a3938;letter-spacing:-0.434px;">Qtr 1</span>
<span style="left:282.00px;top:242.94px;font-size:12px;color:#3a3938;letter-spacing:-0.815px;">January</span>
<span style="left:341.12px;top:242.94px;font-size:12px;color:#3a3938;letter-spacing:-0.480px;">20</span>
<span style="left:442.31px;top:242.94px;font-size:12px;color:#3a3938;letter-spacing:-0.487px;">1</span>
<span style="left:547.31px;top:242.94px;font-size:12px;color:#3a3938;letter-spacing:-0.487px;">1</span>
<span style="left:672.62px;top:242.94px;font-size:12px;color:#3a3938;letter-spacing:-0.480px;">10</span>
<span style="left:695.00px;top:242.94px;font-size:12px;color:#3a3938;letter-spacing:-0.801px;">2023</span>
<span style="left:727.50px;top:242.94px;font-size:12px;color:#3a3938;letter-spacing:-0.434px;">Qtr 1</span>
<span style="left:774.50px;top:242.94px;font-size:12px;color:#3a3938;letter-spacing:-0.815px;">January</span>
<span style="left:833.62px;top:242.94px;font-size:12px;color:#3a3938;letter-spacing:-0.480px;">25</span>
<span style="left:940.42px;top:242.94px;font-size:12px;color:#3a3938;letter-spacing:-0.477px;">400</span>
<span style="left:1038.12px;top:242.94px;font-size:12px;color:#3a3938;letter-spacing:-0.480px;">40</span>
<span style="left:185.81px;top:259.74px;font-size:12px;color:#3a3938;letter-spacing:-0.487px;">1</span>
<span style="left:202.50px;top:259.74px;font-size:12px;color:#3a3938;letter-spacing:-0.801px;">2023</span>
<span style="left:235.00px;top:259.74px;font-size:12px;color:#3a3938;letter-spacing:-0.434px;">Qtr 1</span>
<span style="left:282.00px;top:259.74px;font-size:12px;color:#3a3938;letter-spacing:-0.815px;">January</span>
<span style="left:341.12px;top:259.74px;font-size:12px;color:#3a3938;letter-spacing:-0.480px;">25</span>
<span style="left:442.31px;top:259.74px;font-size:12px;color:#3a3938;letter-spacing:-0.487px;">1</span>
<span style="left:547.31px;top:259.74px;font-size:12px;color:#3a3938;letter-spacing:-0.487px;">1</span>
<span style="left:678.81px;top:259.74px;font-size:12px;color:#3a3938;letter-spacing:-0.487px;">1</span>
<span style="left:695.00px;top:259.74px;font-size:12px;color:#3a3938;letter-spacing:-0.801px;">2023</span>
<span style="left:727.50px;top:259.74px;font-size:12px;color:#3a3938;letter-spacing:-0.434px;">Qtr 1</span>
<span style="left:774.50px;top:259.74px;font-size:12px;color:#3a3938;letter-spacing:-0.815px;">January</span>
<span style="left:833.62px;top:259.74px;font-size:12px;color:#3a3938;letter-spacing:-0.480px;">28</span>
<span style="left:946.62px;top:259.74px;font-size:12px;color:#3a3938;letter-spacing:-0.480px;">50</span>
<span style="left:1038.12px;top:259.74px;font-size:12px;color:#3a3938;letter-spacing:-0.480px;">50</span>
<div style="left:83px;top:273.3px;width:972px;height:16.8px;background:#ededed;"></div>
<span style="left:185.81px;top:276.54px;font-size:12px;color:#3a3938;letter-spacing:-0.487px;">1</span>
<span style="left:202.50px;top:276.54px;font-size:12px;color:#3a3938;letter-spacing:-0.801px;">2023</span>
<span style="left:235.00px;top:276.54px;font-size:12px;color:#3a3938;letter-spacing:-0.434px;">Qtr 1</span>
<span style="left:282.00px;top:276.54px;font-size:12px;color:#3a3938;letter-spacing:-0.815px;">January</span>
<span style="left:341.12px;top:276.54px;font-size:12px;color:#3a3938;letter-spacing:-0.480px;">28</span>
<span style="left:442.31px;top:276.54px;font-size:12px;color:#3a3938;letter-spacing:-0.487px;">1</span>
<span style="left:547.31px;top:276.54px;font-size:12px;color:#3a3938;letter-spacing:-0.487px;">1</span>
<span style="left:678.81px;top:276.54px;font-size:12px;color:#3a3938;letter-spacing:-0.487px;">4</span>
<span style="left:695.00px;top:276.54px;font-size:12px;color:#3a3938;letter-spacing:-0.801px;">2023</span>
<span style="left:727.50px;top:276.54px;font-size:12px;color:#3a3938;letter-spacing:-0.434px;">Qtr 1</span>
<span style="left:774.50px;top:276.54px;font-size:12px;color:#3a3938;letter-spacing:-0.691px;">February</span>
<span style="left:839.81px;top:276.54px;font-size:12px;color:#3a3938;letter-spacing:-0.487px;">1</span>
<span style="left:946.62px;top:276.54px;font-size:12px;color:#3a3938;letter-spacing:-0.480px;">80</span>
<span style="left:1038.12px;top:276.54px;font-size:12px;color:#3a3938;letter-spacing:-0.480px;">20</span>
<span style="left:185.81px;top:293.34px;font-size:12px;color:#3a3938;letter-spacing:-0.487px;">1</span>
<span style="left:202.50px;top:293.34px;font-size:12px;color:#3a3938;letter-spacing:-0.801px;">2023</span>
<span style="left:235.00px;top:293.34px;font-size:12px;color:#3a3938;letter-spacing:-0.434px;">Qtr 1</span>
<span style="left:282.00px;top:293.34px;font-size:12px;color:#3a3938;letter-spacing:-0.691px;">February</span>
<span style="left:347.31px;top:293.34px;font-size:12px;color:#3a3938;letter-spacing:-0.487px;">2</span>
<span style="left:442.31px;top:293.34px;font-size:12px;color:#3a3938;letter-spacing:-0.487px;">1</span>
<span style="left:547.31px;top:293.34px;font-size:12px;color:#3a3938;letter-spacing:-0.487px;">1</span>
<span style="left:678.81px;top:293.34px;font-size:12px;color:#3a3938;letter-spacing:-0.487px;">5</span>
<span style="left:695.00px;top:293.34px;font-size:12px;color:#3a3938;letter-spacing:-0.801px;">2023</span>
<span style="left:727.50px;top:293.34px;font-size:12px;color:#3a3938;letter-spacing:-0.434px;">Qtr 1</span>
<span style="left:774.50px;top:293.34px;font-size:12px;color:#3a3938;letter-spacing:-0.691px;">February</span>
<span style="left:839.81px;top:293.34px;font-size:12px;color:#3a3938;letter-spacing:-0.487px;">6</span>
<span style="left:946.62px;top:293.34px;font-size:12px;color:#3a3938;letter-spacing:-0.480px;">75</span>
<span style="left:1038.12px;top:293.34px;font-size:12px;color:#3a3938;letter-spacing:-0.480px;">15</span>
<div style="left:83px;top:306.9px;width:972px;height:16.8px;background:#ededed;"></div>
<span style="left:185.81px;top:310.14px;font-size:12px;color:#3a3938;letter-spacing:-0.487px;">1</span>
<span style="left:202.50px;top:310.14px;font-size:12px;color:#3a3938;letter-spacing:-0.801px;">2023</span>
<span style="left:235.00px;top:310.14px;font-size:12px;color:#3a3938;letter-spacing:-0.434px;">Qtr 1</span>
<span style="left:282.00px;top:310.14px;font-size:12px;color:#3a3938;letter-spacing:-0.691px;">February</span>
<span style="left:347.31px;top:310.14px;font-size:12px;color:#3a3938;letter-spacing:-0.487px;">5</span>
<span style="left:442.31px;top:310.14px;font-size:12px;color:#3a3938;letter-spacing:-0.487px;">1</span>
<span style="left:547.31px;top:310.14px;font-size:12px;color:#3a3938;letter-spacing:-0.487px;">1</span>
<span style="left:678.81px;top:310.14px;font-size:12px;color:#3a3938;letter-spacing:-0.487px;">3</span>
<span style="left:695.00px;top:310.14px;font-size:12px;color:#3a3938;letter-spacing:-0.801px;">2023</span>
<span style="left:727.50px;top:310.14px;font-size:12px;color:#3a3938;letter-spacing:-0.434px;">Qtr 1</span>
<span style="left:774.50px;top:310.14px;font-size:12px;color:#3a3938;letter-spacing:-0.691px;">February</span>
<span style="left:833.62px;top:310.14px;font-size:12px;color:#3a3938;letter-spacing:-0.480px;">10</span>
<span style="left:946.62px;top:310.14px;font-size:12px;color:#3a3938;letter-spacing:-0.480px;">90</span>
<span style="left:1038.12px;top:310.14px;font-size:12px;color:#3a3938;letter-spacing:-0.480px;">30</span>
<span style="left:185.81px;top:326.94px;font-size:12px;color:#3a3938;letter-spacing:-0.487px;">1</span>
<span style="left:202.50px;top:326.94px;font-size:12px;color:#3a3938;letter-spacing:-0.801px;">2023</span>
<span style="left:235.00px;top:326.94px;font-size:12px;color:#3a3938;letter-spacing:-0.434px;">Qtr 1</span>
<span style="left:282.00px;top:326.94px;font-size:12px;color:#3a3938;letter-spacing:-0.691px;">February</span>
<span style="left:341.57px;top:326.94px;font-size:12px;color:#3a3938;letter-spacing:-0.034px;">11</span>
<span style="left:442.31px;top:326.94px;font-size:12px;color:#3a3938;letter-spacing:-0.487px;">1</span>
<span style="left:547.31px;top:326.94px;font-size:12px;color:#3a3938;letter-spacing:-0.487px;">1</span>
<span style="left:678.81px;top:326.94px;font-size:12px;color:#3a3938;letter-spacing:-0.487px;">7</span>
<span style="left:695.00px;top:326.94px;font-size:12px;color:#3a3938;letter-spacing:-0.801px;">2023</span>
<span style="left:727.50px;top:326.94px;font-size:12px;color:#3a3938;letter-spacing:-0.434px;">Qtr 1</span>
<span style="left:774.50px;top:326.94px;font-size:12px;color:#3a3938;letter-spacing:-0.691px;">February</span>
<span style="left:833.62px;top:326.94px;font-size:12px;color:#3a3938;letter-spacing:-0.480px;">15</span>
<span style="left:940.42px;top:326.94px;font-size:12px;color:#3a3938;letter-spacing:-0.477px;">175</span>
<span style="left:1038.12px;top:326.94px;font-size:12px;color:#3a3938;letter-spacing:-0.480px;">25</span>
<div style="left:83px;top:340.5px;width:972px;height:16.8px;background:#ededed;"></div>
<span style="left:185.81px;top:343.74px;font-size:12px;color:#3a3938;letter-spacing:-0.487px;">1</span>
<span style="left:202.50px;top:343.74px;font-size:12px;color:#3a3938;letter-spacing:-0.801px;">2023</span>
<span style="left:235.00px;top:343.74px;font-size:12px;color:#3a3938;letter-spacing:-0.434px;">Qtr 1</span>
<span style="left:282.00px;top:343.74px;font-size:12px;color:#3a3938;letter-spacing:-0.691px;">February</span>
<span style="left:341.12px;top:343.74px;font-size:12px;color:#3a3938;letter-spacing:-0.480px;">15</span>
<span style="left:442.31px;top:343.74px;font-size:12px;color:#3a3938;letter-spacing:-0.487px;">1</span>
<span style="left:547.31px;top:343.74px;font-size:12px;color:#3a3938;letter-spacing:-0.487px;">1</span>
<span style="left:678.81px;top:343.74px;font-size:12px;color:#3a3938;letter-spacing:-0.487px;">9</span>
<span style="left:695.00px;top:343.74px;font-size:12px;color:#3a3938;letter-spacing:-0.801px;">2023</span>
<span style="left:727.50px;top:343.74px;font-size:12px;color:#3a3938;letter-spacing:-0.434px;">Qtr 1</span>
<span style="left:774.50px;top:343.74px;font-size:12px;color:#3a3938;letter-spacing:-0.691px;">February</span>
<span style="left:833.62px;top:343.74px;font-size:12px;color:#3a3938;letter-spacing:-0.480px;">20</span>
<span style="left:940.42px;top:343.74px;font-size:12px;color:#3a3938;letter-spacing:-0.477px;">360</span>
<span style="left:1038.12px;top:343.74px;font-size:12px;color:#3a3938;letter-spacing:-0.480px;">40</span>
<span style="left:185.81px;top:360.54px;font-size:12px;color:#3a3938;letter-spacing:-0.487px;">1</span>
<span style="left:202.50px;top:360.54px;font-size:12px;color:#3a3938;letter-spacing:-0.801px;">2023</span>
<span style="left:235.00px;top:360.54px;font-size:12px;color:#3a3938;letter-spacing:-0.434px;">Qtr 1</span>
<span style="left:282.00px;top:360.54px;font-size:12px;color:#3a3938;letter-spacing:-0.691px;">February</span>
<span style="left:341.12px;top:360.54px;font-size:12px;color:#3a3938;letter-spacing:-0.480px;">20</span>
<span style="left:442.31px;top:360.54px;font-size:12px;color:#3a3938;letter-spacing:-0.487px;">1</span>
<span style="left:547.31px;top:360.54px;font-size:12px;color:#3a3938;letter-spacing:-0.487px;">1</span>
<span style="left:678.81px;top:360.54px;font-size:12px;color:#3a3938;letter-spacing:-0.487px;">2</span>
<span style="left:695.00px;top:360.54px;font-size:12px;color:#3a3938;letter-spacing:-0.801px;">2023</span>
<span style="left:727.50px;top:360.54px;font-size:12px;color:#3a3938;letter-spacing:-0.434px;">Qtr 1</span>
<span style="left:774.50px;top:360.54px;font-size:12px;color:#3a3938;letter-spacing:-0.691px;">February</span>
<span style="left:833.62px;top:360.54px;font-size:12px;color:#3a3938;letter-spacing:-0.480px;">23</span>
<span style="left:940.42px;top:360.54px;font-size:12px;color:#3a3938;letter-spacing:-0.477px;">100</span>
<span style="left:1038.12px;top:360.54px;font-size:12px;color:#3a3938;letter-spacing:-0.480px;">50</span>
<div style="left:83px;top:374.1px;width:972px;height:16.8px;background:#ededed;"></div>
<span style="left:185.81px;top:377.34px;font-size:12px;color:#3a3938;letter-spacing:-0.487px;">1</span>
<span style="left:202.50px;top:377.34px;font-size:12px;color:#3a3938;letter-spacing:-0.801px;">2023</span>
<span style="left:235.00px;top:377.34px;font-size:12px;color:#3a3938;letter-spacing:-0.434px;">Qtr 1</span>
<span style="left:282.00px;top:377.34px;font-size:12px;color:#3a3938;letter-spacing:-0.691px;">February</span>
<span style="left:341.12px;top:377.34px;font-size:12px;color:#3a3938;letter-spacing:-0.480px;">23</span>
<span style="left:442.31px;top:377.34px;font-size:12px;color:#3a3938;letter-spacing:-0.487px;">1</span>
<span style="left:547.31px;top:377.34px;font-size:12px;color:#3a3938;letter-spacing:-0.487px;">1</span>
<span style="left:678.81px;top:377.34px;font-size:12px;color:#3a3938;letter-spacing:-0.487px;">5</span>
<span style="left:695.00px;top:377.34px;font-size:12px;color:#3a3938;letter-spacing:-0.801px;">2023</span>
<span style="left:727.50px;top:377.34px;font-size:12px;color:#3a3938;letter-spacing:-0.434px;">Qtr 1</span>
<span style="left:774.50px;top:377.34px;font-size:12px;color:#3a3938;letter-spacing:-0.691px;">February</span>
<span style="left:833.62px;top:377.34px;font-size:12px;color:#3a3938;letter-spacing:-0.480px;">27</span>
<span style="left:940.42px;top:377.34px;font-size:12px;color:#3a3938;letter-spacing:-0.477px;">100</span>
<span style="left:1038.12px;top:377.34px;font-size:12px;color:#3a3938;letter-spacing:-0.480px;">20</span>
<span style="left:185.81px;top:394.14px;font-size:12px;color:#3a3938;letter-spacing:-0.487px;">1</span>
<span style="left:202.50px;top:394.14px;font-size:12px;color:#3a3938;letter-spacing:-0.801px;">2023</span>
<span style="left:235.00px;top:394.14px;font-size:12px;color:#3a3938;letter-spacing:-0.434px;">Qtr 1</span>
<span style="left:282.00px;top:394.14px;font-size:12px;color:#3a3938;letter-spacing:-0.691px;">February</span>
<span style="left:341.12px;top:394.14px;font-size:12px;color:#3a3938;letter-spacing:-0.480px;">28</span>
<span style="left:442.31px;top:394.14px;font-size:12px;color:#3a3938;letter-spacing:-0.487px;">1</span>
<span style="left:547.31px;top:394.14px;font-size:12px;color:#3a3938;letter-spacing:-0.487px;">1</span>
<span style="left:678.81px;top:394.14px;font-size:12px;color:#3a3938;letter-spacing:-0.487px;">4</span>
<span style="left:695.00px;top:394.14px;font-size:12px;color:#3a3938;letter-spacing:-0.801px;">2023</span>
<span style="left:727.50px;top:394.14px;font-size:12px;color:#3a3938;letter-spacing:-0.434px;">Qtr 1</span>
<span style="left:774.50px;top:394.14px;font-size:12px;color:#3a3938;letter-spacing:-0.569px;">March</span>
<span style="left:839.81px;top:394.14px;font-size:12px;color:#3a3938;letter-spacing:-0.487px;">3</span>
<span style="left:946.62px;top:394.14px;font-size:12px;color:#3a3938;letter-spacing:-0.480px;">60</span>
<span style="left:1038.12px;top:394.14px;font-size:12px;color:#3a3938;letter-spacing:-0.480px;">15</span>
<div style="left:83px;top:407.2px;width:972px;height:1.6px;background:#b4d9fc;"></div>
<span style="left:178.92px;top:411.44px;font-size:12px;color:#201f1e;font-weight:700;letter-spacing:-0.280px;">26</span>
<span style="left:435.42px;top:411.44px;font-size:12px;color:#201f1e;font-weight:700;letter-spacing:-0.280px;">26</span>
<span style="left:540.42px;top:411.44px;font-size:12px;color:#201f1e;font-weight:700;letter-spacing:-0.280px;">26</span>
<span style="left:665.52px;top:411.44px;font-size:12px;color:#201f1e;font-weight:700;letter-spacing:-0.277px;">137</span>
<span style="left:933.12px;top:411.44px;font-size:12px;color:#201f1e;font-weight:700;letter-spacing:-0.276px;">4045</span>
<span style="left:1031.02px;top:411.44px;font-size:12px;color:#201f1e;font-weight:700;letter-spacing:-0.277px;">760</span>
<div style="left:1058px;top:134px;width:8px;height:282px;background:#f1f1f1;"></div>
<div style="left:1058.5px;top:155.5px;width:7px;height:139px;background:#c9c9c9;"></div>
<svg style="left:1058px;top:141px;" width="8" height="6" viewBox="0 0 8 6" fill="none"><path d="M1.2 4.6 L4 1.6 L6.8 4.6" stroke="#605e5c" stroke-width="1"/></svg>
<svg style="left:1058px;top:403px;" width="8" height="6" viewBox="0 0 8 6" fill="none"><path d="M1.2 1.4 L4 4.4 L6.8 1.4" stroke="#605e5c" stroke-width="1"/></svg>
<div style="left:78px;top:437.3px;width:992px;height:272.4px;border:1px solid #bcbcbc;border-top:1.5px solid #d2d2d2;box-sizing:border-box;background:#fff;"></div>
<svg style="left:77px;top:436.6px;" width="9" height="9" viewBox="0 0 9 9" fill="none"><path d="M1.5 8.4V1.5H8.6" stroke="#9a9a9a" stroke-width="3"/></svg>
<svg style="left:1062px;top:436.5px;" width="9" height="9" viewBox="0 0 9 9" fill="none"><path d="M0 1H8V8.5" stroke="#6e6e6e" stroke-width="1.2"/></svg>
<svg style="left:77px;top:702.4px;" width="9" height="8" viewBox="0 0 9 8" fill="none"><path d="M1.5 0V6.5H8.6" stroke="#9a9a9a" stroke-width="3"/></svg>
<svg style="left:1063px;top:702.4px;" width="8" height="8" viewBox="0 0 8 8" fill="none"><path d="M0 6.5H6.5V0" stroke="#9a9a9a" stroke-width="3"/></svg>
<div style="left:569px;top:437px;width:10px;height:3px;background:#9a9a9a;"></div>
<div style="left:569px;top:707px;width:10px;height:3px;background:#9a9a9a;"></div>
<div style="left:77px;top:569px;width:3px;height:10px;background:#9a9a9a;"></div>
<div style="left:1067px;top:569px;width:3px;height:10px;background:#9a9a9a;"></div>
<div style="left:36px;top:709.7px;width:1075px;height:2px;background:repeating-linear-gradient(90deg,#3d3d3d 0 1.75px,rgba(255,255,255,0.85) 1.75px 3.5px);"></div>
<span style="left:82.50px;top:438.34px;font-size:14px;color:#252423;letter-spacing:-0.056px;">Sum of TotalRevenue by Month</span>
<svg style="left:1002.5px;top:442.5px;" width="15" height="13" viewBox="0 0 15 13" fill="none"><path d="M0.9 0.9H14.1L8.9 6.8V12.1H6.1V6.8Z" stroke="#7a7876" stroke-width="1" stroke-linejoin="round"/></svg>
<svg style="left:1028px;top:443.5px;" width="13" height="12" viewBox="0 0 13 12" fill="none"><path d="M5 1H0.6V10.8H11.8V7.6" stroke="#7a7876" stroke-width="1.1"/><path d="M0.6 7.2H5V10.8" stroke="#7a7876" stroke-width="1.1"/><path d="M8 0.8H12V4.8M11.8 1L7 5.8" stroke="#7a7876" stroke-width="1"/></svg>
<div style="left:1052.4px;top:448px;width:2px;height:2px;background:#7a7876;border-radius:1px;"></div>
<div style="left:1057.8000000000002px;top:448px;width:2px;height:2px;background:#7a7876;border-radius:1px;"></div>
<div style="left:1063.2px;top:448px;width:2px;height:2px;background:#7a7876;border-radius:1px;"></div>
<span style="left:99.28px;top:458.78px;font-size:11px;color:#605e5c;letter-spacing:-0.521px;">2000</span>
<div style="left:128px;top:465.3px;width:936px;height:1px;background:repeating-linear-gradient(90deg,#dedede 0 1px,transparent 1px 5px);"></div>
<span style="left:99.28px;top:510.98px;font-size:11px;color:#605e5c;letter-spacing:-0.521px;">1500</span>
<div style="left:128px;top:517.5px;width:936px;height:1px;background:repeating-linear-gradient(90deg,#dedede 0 1px,transparent 1px 5px);"></div>
<span style="left:99.28px;top:563.18px;font-size:11px;color:#605e5c;letter-spacing:-0.521px;">1000</span>
<div style="left:128px;top:569.7px;width:936px;height:1px;background:repeating-linear-gradient(90deg,#dedede 0 1px,transparent 1px 5px);"></div>
<span style="left:104.88px;top:615.28px;font-size:11px;color:#605e5c;letter-spacing:-0.520px;">500</span>
<div style="left:128px;top:621.8px;width:936px;height:1px;background:repeating-linear-gradient(90deg,#dedede 0 1px,transparent 1px 5px);"></div>
<span style="left:116.08px;top:667.38px;font-size:11px;color:#605e5c;letter-spacing:-0.525px;">0</span>
<div style="left:128px;top:673.9px;width:936px;height:1px;background:repeating-linear-gradient(90deg,#dedede 0 1px,transparent 1px 5px);"></div>
<span style="left:89.5px;top:569.5px;font-size:12px;color:#252423;letter-spacing:-0.05px;-webkit-text-stroke:0.2px;transform:translate(-50%,-50%) rotate(-90deg);">Sum of TotalRevenue</span>
<div style="left:211.7px;top:558.5px;width:155.3px;height:114.9px;background:#118dff;"></div>
<div style="left:415px;top:573.6px;width:155.7px;height:99.8px;background:#118dff;"></div>
<div style="left:618px;top:525.5px;width:156.2px;height:147.9px;background:#118dff;"></div>
<div style="left:821.6px;top:615px;width:156.2px;height:58.4px;background:#118dff;"></div>
<span style="left:275.00px;top:677.28px;font-size:11px;color:#605e5c;letter-spacing:-0.592px;">January</span>
<span style="left:475.95px;top:677.28px;font-size:11px;color:#605e5c;letter-spacing:-0.504px;">February</span>
<span style="left:685.14px;top:677.28px;font-size:11px;color:#605e5c;letter-spacing:-0.412px;">March</span>
<span style="left:891.40px;top:677.28px;font-size:11px;color:#605e5c;letter-spacing:0.297px;">April</span>
<span style="left:581.86px;top:692.64px;font-size:12px;color:#252423;-webkit-text-stroke:0.3px;letter-spacing:-0.272px;">Month</span>
<div style="left:1111px;top:105px;width:1px;height:686px;background:#bab8b5;"></div>
<div style="left:1112px;top:106.6px;width:175.3px;height:685px;background:#fff;"></div>
<svg style="left:1122px;top:115px;" width="16" height="13.5" viewBox="0 0 16 13.5" fill="none"><path d="M1 1H14.4L9.3 7V12.2H6.1V7Z" stroke="#252423" stroke-width="1.5" stroke-linejoin="round"/></svg>
<span style="left:1144.30px;top:114.34px;font-size:14px;color:#252423;-webkit-text-stroke:0.45px;letter-spacing:-0.089px;">Filters</span>
<svg style="left:1240.5px;top:117px;" width="12" height="8" viewBox="0 0 12 8" fill="none"><path d="M0.8 5C2.2 0.4 9.8 0.4 11.2 5" stroke="#484644" stroke-width="1.3"/><circle cx="6" cy="4.8" r="1.6" stroke="#484644" stroke-width="1.2"/></svg>
<svg style="left:1267px;top:115.4px;" width="12" height="12.6" viewBox="0 0 12 12.6" fill="none"><path d="M0.9 0.7L5.8 6.3L0.9 11.9M5.7 0.7L10.6 6.3L5.7 11.9" stroke="#323130" stroke-width="1.1"/></svg>
<div style="left:1119px;top:144.2px;width:158px;height:26.6px;background:#fff;border:1px solid #c8c6c4;box-sizing:border-box;border-radius:2px;"></div>
<svg style="left:1129px;top:151px;" width="13" height="13" viewBox="0 0 13 13" fill="none"><circle cx="8" cy="5" r="4.2" stroke="#605e5c" stroke-width="1"/><path d="M5 8L0.8 12.2" stroke="#605e5c" stroke-width="1.1"/></svg>
<span style="left:1154.50px;top:151.98px;font-size:11px;color:#484644;letter-spacing:-0.143px;">Search</span>
<div style="left:1112px;top:175px;width:176px;height:1px;background:#d2d0ce;"></div>
<span style="left:1119.50px;top:191.58px;font-size:11px;color:#3b3a39;letter-spacing:-0.300px;">Filters on this visual</span>
<div style="left:1267.0px;top:198.8px;width:1.4px;height:1.4px;background:#605e5c;border-radius:1px;"></div>
<div style="left:1271.4px;top:198.8px;width:1.4px;height:1.4px;background:#605e5c;border-radius:1px;"></div>
<div style="left:1275.8px;top:198.8px;width:1.4px;height:1.4px;background:#605e5c;border-radius:1px;"></div>
<div style="left:1119px;top:212.3px;width:161px;height:39px;background:#fff;border:1px solid #d2d0ce;box-sizing:border-box;"></div>
<span style="left:1127.40px;top:218.28px;font-size:11px;color:#3b3a39;letter-spacing:-0.130px;">OrderDate - Month</span>
<span style="left:1127.40px;top:234.28px;font-size:11px;color:#3b3a39;letter-spacing:-0.320px;">is (All)</span>
<div style="left:1119px;top:257.7px;width:161px;height:39.6px;background:#fff;border:1px solid #d2d0ce;box-sizing:border-box;"></div>
<span style="left:1127.40px;top:263.38px;font-size:11px;color:#3b3a39;letter-spacing:-0.420px;">Sum of TotalRevenue</span>
<span style="left:1127.40px;top:279.38px;font-size:11px;color:#3b3a39;letter-spacing:-0.320px;">is (All)</span>
<div style="left:1119px;top:303.7px;width:161px;height:38.6px;background:#fff;border:1px solid #d2d0ce;box-sizing:border-box;"></div>
<span style="left:1152.64px;top:317.58px;font-size:11px;color:#3b3a39;letter-spacing:-0.218px;">Add data fields here</span>
<span style="left:1119.50px;top:367.78px;font-size:11px;color:#3b3a39;letter-spacing:-0.272px;">Filters on this page</span>
<div style="left:1267.0px;top:375px;width:1.4px;height:1.4px;background:#605e5c;border-radius:1px;"></div>
<div style="left:1271.4px;top:375px;width:1.4px;height:1.4px;background:#605e5c;border-radius:1px;"></div>
<div style="left:1275.8px;top:375px;width:1.4px;height:1.4px;background:#605e5c;border-radius:1px;"></div>
<div style="left:1119px;top:388px;width:161px;height:39.6px;background:#fff;border:1px solid #d2d0ce;box-sizing:border-box;"></div>
<span style="left:1152.64px;top:402.38px;font-size:11px;color:#3b3a39;letter-spacing:-0.218px;">Add data fields here</span>
<span style="left:1119.50px;top:452.58px;font-size:11px;color:#3b3a39;letter-spacing:-0.316px;">Filters on all pages</span>
<div style="left:1267.0px;top:459.8px;width:1.4px;height:1.4px;background:#605e5c;border-radius:1px;"></div>
<div style="left:1271.4px;top:459.8px;width:1.4px;height:1.4px;background:#605e5c;border-radius:1px;"></div>
<div style="left:1275.8px;top:459.8px;width:1.4px;height:1.4px;background:#605e5c;border-radius:1px;"></div>
<div style="left:1119px;top:472.8px;width:161px;height:39.6px;background:#fff;border:1px solid #d2d0ce;box-sizing:border-box;"></div>
<span style="left:1152.64px;top:487.38px;font-size:11px;color:#3b3a39;letter-spacing:-0.218px;">Add data fields here</span>
<div style="left:1287.3px;top:106px;width:158.7px;height:685px;background:#f3f2f1;"></div>
<div style="left:1287.2px;top:106.6px;width:1px;height:685px;background:#e6e4e2;"></div>
<span style="left:1295.20px;top:114.34px;font-size:14px;color:#252423;-webkit-text-stroke:0.45px;letter-spacing:0.081px;">Visualizations</span>
<svg style="left:1427.5px;top:115.4px;" width="12" height="12.6" viewBox="0 0 12 12.6" fill="none"><path d="M0.9 0.7L5.8 6.3L0.9 11.9M5.7 0.7L10.6 6.3L5.7 11.9" stroke="#323130" stroke-width="1.1"/></svg>
<span style="left:1295.20px;top:139.38px;font-size:11px;color:#252423;-webkit-text-stroke:0.3px;letter-spacing:-0.137px;">Build visual</span>
<div style="left:1295px;top:155px;width:28px;height:27.5px;background:#d2d0ce;border-radius:2px;"></div>
<div style="left:1288px;top:193px;width:158px;height:1px;background:#b3b0ad;"></div>
<svg style="left:1301px;top:187px;" width="15" height="8" viewBox="0 0 15 8" fill="none"><path d="M0.5 7L7.5 0.8L14.5 7" fill="#f3f2f1" stroke="#b3b0ad" stroke-width="1"/><rect x="1" y="6.6" width="13" height="1.4" fill="#f3f2f1"/></svg>
<div style="left:1319px;top:201px;width:21.8px;height:21px;background:#e1dfdd;border:1px solid #8a8886;box-sizing:border-box;"></div>
<div style="left:1288px;top:374px;width:158px;height:1px;background:#dddbd9;"></div>
<svg style="left:1297.2px;top:204.0px;overflow:visible;" width="16" height="16" viewBox="0 0 16 16" fill="none"><path d="M0.8 0.5V15.3H16" stroke="#3b3a39" stroke-width="1.1"/><rect x="1.4" y="2.2" width="3.6" height="3.4" fill="#fafafa" stroke="#3b3a39" stroke-width="0.9"/><rect x="5" y="2.2" width="5.4" height="3.4" fill="#83beec" stroke="#1a7fd4" stroke-width="1.1"/><rect x="1.4" y="9.4" width="5.8" height="3.4" fill="#fafafa" stroke="#3b3a39" stroke-width="0.9"/><rect x="7.2" y="9.4" width="7" height="3.4" fill="#c8c6c4" stroke="#9a9896" stroke-width="0.9"/></svg>
<svg style="left:1321.7px;top:204.0px;overflow:visible;" width="16" height="16" viewBox="0 0 16 16" fill="none"><path d="M0.8 0.5V15.3H16" stroke="#3b3a39" stroke-width="1.1"/><rect x="3.6" y="10.4" width="3" height="4.6" fill="#fafafa" stroke="#3b3a39" stroke-width="0.9"/><rect x="3.6" y="4.6" width="3" height="5.8" fill="#83beec" stroke="#1a7fd4" stroke-width="1.1"/><rect x="11" y="9.4" width="3" height="5.6" fill="#fafafa" stroke="#3b3a39" stroke-width="0.9"/><rect x="11" y="2.6" width="3" height="6.8" fill="#c8c6c4" stroke="#9a9896" stroke-width="0.9"/></svg>
<svg style="left:1346.2px;top:204.0px;overflow:visible;" width="16" height="16" viewBox="0 0 16 16" fill="none"><path d="M0.8 0.5V15.8" stroke="#3b3a39" stroke-width="1.1"/><rect x="1.4" y="0.8" width="14" height="2.8" fill="#83beec" stroke="#1a7fd4" stroke-width="1"/><rect x="1.4" y="4.4" width="7.6" height="2.4" fill="#fafafa" stroke="#3b3a39" stroke-width="0.9"/><rect x="1.4" y="7.2" width="5.4" height="2.2" fill="#c8c6c4" stroke="#9a9896" stroke-width="0.9"/><rect x="1.4" y="9.8" width="10" height="2.4" fill="#fafafa" stroke="#3b3a39" stroke-width="0.9"/><path d="M1.4 14.6H16" stroke="#3b3a39" stroke-width="1.8"/></svg>
<svg style="left:1370.7px;top:204.0px;overflow:visible;" width="16" height="16" viewBox="0 0 16 16" fill="none"><path d="M0.8 0.5V15.3H16" stroke="#3b3a39" stroke-width="1.1"/><rect x="1.6" y="0.8" width="3.2" height="14.4" fill="#83beec" stroke="#1a7fd4" stroke-width="1.1"/><rect x="4.8" y="6.2" width="2.8" height="9" fill="#fafafa" stroke="#3b3a39" stroke-width="0.9"/><rect x="8.8" y="8.2" width="2" height="7" fill="#c8c6c4" stroke="#9a9896" stroke-width="0.9"/><rect x="11.2" y="4.6" width="3.4" height="10.6" fill="#fafafa" stroke="#3b3a39" stroke-width="0.9"/></svg>
<svg style="left:1395.2px;top:204.0px;overflow:visible;" width="16" height="16" viewBox="0 0 16 16" fill="none"><path d="M0.8 0.5V15.3H16" stroke="#3b3a39" stroke-width="1.1"/><rect x="1.4" y="2.2" width="2.6" height="3.4" fill="#fafafa" stroke="#3b3a39" stroke-width="0.9"/><rect x="4" y="2.2" width="10.4" height="3.4" fill="#83beec" stroke="#1a7fd4" stroke-width="1.1"/><rect x="1.4" y="9.4" width="7.8" height="3.4" fill="#fafafa" stroke="#3b3a39" stroke-width="0.9"/><rect x="9.2" y="9.4" width="5.2" height="3.4" fill="#c8c6c4" stroke="#9a9896" stroke-width="0.9"/></svg>
<svg style="left:1419.7px;top:204.0px;overflow:visible;" width="16" height="16" viewBox="0 0 16 16" fill="none"><path d="M0.8 0.5V15.3H16" stroke="#3b3a39" stroke-width="1.1"/><rect x="3.6" y="12" width="3" height="3" fill="#fafafa" stroke="#3b3a39" stroke-width="0.9"/><rect x="3.6" y="2.2" width="3" height="9.8" fill="#83beec" stroke="#1a7fd4" stroke-width="1.1"/><rect x="11" y="7.2" width="3" height="7.8" fill="#fafafa" stroke="#3b3a39" stroke-width="0.9"/><rect x="11" y="2.2" width="3" height="5" fill="#c8c6c4" stroke="#9a9896" stroke-width="0.9"/></svg>
<svg style="left:1297.2px;top:228.4px;overflow:visible;" width="16" height="16" viewBox="0 0 16 16" fill="none"><path d="M0.8 0.5V15.3H16" stroke="#3b3a39" stroke-width="1.1"/><path d="M1.2 13.6L10.4 3.6L15.6 8.6" stroke="#1a7fd4" stroke-width="1"/><path d="M1.2 9.4L5.4 4.6L10.2 8.6L15.4 3.4" stroke="#3b3a39" stroke-width="1.1"/></svg>
<svg style="left:1321.7px;top:228.4px;overflow:visible;" width="16" height="16" viewBox="0 0 16 16" fill="none"><path d="M10 7.6L13 1.2L15.6 7V15.4H10Z" fill="#c8c6c4" stroke="#9a9896" stroke-width="0.9"/><path d="M0.6 8.6L5.6 1.4L10.2 7.6" fill="#fafafa" stroke="#3b3a39" stroke-width="1"/><path d="M0.6 8.6L5.6 1.4L9.6 6.8L4 12.6Z" fill="#fafafa"/><path d="M0.6 9.2L3.6 12.4L9.8 5.8L15.6 15.4H0.6Z" fill="#83beec" stroke="#1a7fd4" stroke-width="1.1" stroke-linejoin="round"/></svg>
<svg style="left:1346.2px;top:228.4px;overflow:visible;" width="16" height="16" viewBox="0 0 16 16" fill="none"><path d="M0.8 0.5V15.3H16" stroke="#3b3a39" stroke-width="1.1"/><path d="M1.4 3.6L5.8 8.2L10.8 2.8L15.8 5.6V11L10.8 7.6L5.8 13L1.4 8.2Z" fill="#83beec"/><path d="M1.4 3.6L5.8 8.2L10.8 2.8L15.8 5.6M1.4 8.2L5.8 13L10.8 7.6L15.8 11" stroke="#1a7fd4" stroke-width="1.1"/></svg>
<svg style="left:1370.7px;top:228.4px;overflow:visible;" width="16" height="16" viewBox="0 0 16 16" fill="none"><path d="M0.8 0.5V15.3H16" stroke="#3b3a39" stroke-width="1.1"/><rect x="3.2" y="12" width="3" height="3" fill="#fafafa" stroke="#3b3a39" stroke-width="0.9"/><rect x="3.2" y="2" width="3" height="10" fill="#83beec" stroke="#1a7fd4" stroke-width="1.1"/><rect x="10.6" y="7" width="3" height="8" fill="#fafafa" stroke="#3b3a39" stroke-width="0.9"/><rect x="10.6" y="2.2" width="3" height="4.8" fill="#c8c6c4" stroke="#9a9896" stroke-width="0.9"/><path d="M1.2 13.4L5 9.2L9.4 12.2L15.6 6.2" stroke="#3b3a39" stroke-width="1.1"/></svg>
<svg style="left:1395.2px;top:228.4px;overflow:visible;" width="16" height="16" viewBox="0 0 16 16" fill="none"><path d="M0.8 0.5V15.3H16" stroke="#3b3a39" stroke-width="1.1"/><rect x="3" y="7.2" width="3.4" height="8" fill="#83beec" stroke="#1a7fd4" stroke-width="1.1"/><rect x="7.4" y="1.4" width="3" height="13.6" fill="#fafafa" stroke="#3b3a39" stroke-width="0.9"/><path d="M11.4 15V6.4L14.6 4.4V15Z" fill="#c8c6c4" stroke="#9a9896" stroke-width="0.9"/><path d="M1.2 13.6L5 9.6L9.4 12.4L15.6 6.2" stroke="#3b3a39" stroke-width="1.1"/></svg>
<svg style="left:1419.7px;top:228.4px;overflow:visible;" width="16" height="16" viewBox="0 0 16 16" fill="none"><path d="M0.8 0.5V15.3H16" stroke="#3b3a39" stroke-width="1.1"/><path d="M2.4 3L8.4 5.8L15.2 2.6V6.4L8.4 9.6L2.4 6.4Z" fill="#c8c6c4" stroke="#9a9896" stroke-width="0.8"/><path d="M2.4 11V13.6H15.2V11L11.6 10.4L8.6 12L5.6 10.4Z" fill="#e07a16"/><path d="M2.4 6.6L5.4 8.2Q8.6 12.6 11.6 8.2L15.2 6.4V10.2L12 11.2Q8.6 15.2 5.2 11.2L2.4 10.4Z" fill="#83beec" stroke="#1a7fd4" stroke-width="1"/><rect x="7.4" y="9" width="2.2" height="1.8" fill="#e07a16"/></svg>
<svg style="left:1297.2px;top:252.8px;overflow:visible;" width="16" height="16" viewBox="0 0 16 16" fill="none"><path d="M0.9 0.5V15.3H16" stroke="#9a9896" stroke-width="1.6"/><rect x="2.4" y="5.6" width="3" height="9.6" fill="#fafafa" stroke="#3b3a39" stroke-width="0.9"/><rect x="5.4" y="9" width="3.2" height="6.2" fill="#fafafa" stroke="#3b3a39" stroke-width="0.9"/><rect x="11" y="1.2" width="3.4" height="14" fill="#fafafa" stroke="#3b3a39" stroke-width="0.9"/><rect x="8.8" y="1.2" width="2" height="7.8" fill="#83beec" stroke="#1a7fd4" stroke-width="1.1"/></svg>
<svg style="left:1321.7px;top:252.8px;overflow:visible;" width="16" height="16" viewBox="0 0 16 16" fill="none"><rect x="0.8" y="1.2" width="14.8" height="3.8" fill="#83beec" stroke="#1a7fd4" stroke-width="1.1"/><rect x="2.8" y="5" width="10.8" height="4.4" fill="#83beec" stroke="#1a7fd4" stroke-width="1.1"/><rect x="5.2" y="9.4" width="6" height="4.6" fill="#83beec" stroke="#1a7fd4" stroke-width="1.1"/></svg>
<svg style="left:1346.2px;top:252.8px;overflow:visible;" width="16" height="16" viewBox="0 0 16 16" fill="none"><path d="M0.8 0.5V15.3H16" stroke="#9a9896" stroke-width="1.1"/><rect x="11.6" y="0.8" width="2.6" height="2.4" fill="#252423"/><rect x="2.8" y="10.6" width="2.6" height="2.4" fill="#252423"/><rect x="2.8" y="3.4" width="2.4" height="2.2" fill="#9ccdf3"/><rect x="7.4" y="6" width="2.4" height="2.2" fill="#9ccdf3"/><rect x="11.8" y="9.6" width="2.4" height="2.2" fill="#9ccdf3"/></svg>
<svg style="left:1370.7px;top:252.8px;overflow:visible;" width="16" height="16" viewBox="0 0 16 16" fill="none"><circle cx="8" cy="8" r="7.3" fill="#fafafa" stroke="#3b3a39" stroke-width="1"/><path d="M8 0.7A7.3 7.3 0 0 1 13.2 13.2L8 8Z" fill="#83beec" stroke="#1a7fd4" stroke-width="1.1" stroke-linejoin="round"/></svg>
<svg style="left:1395.2px;top:252.8px;overflow:visible;" width="16" height="16" viewBox="0 0 16 16" fill="none"><circle cx="8" cy="8" r="5.4" stroke="#83beec" stroke-width="3.8"/><circle cx="8" cy="8" r="7.3" stroke="#1a7fd4" stroke-width="0.9"/><circle cx="8" cy="8" r="3.5" stroke="#1a7fd4" stroke-width="0.9"/><path d="M0.7 8A7.3 7.3 0 0 1 8 0.7V4.5A3.5 3.5 0 0 0 4.5 8Z" fill="#fafafa" stroke="#9a9896" stroke-width="0.9"/></svg>
<svg style="left:1419.7px;top:252.8px;overflow:visible;" width="16" height="16" viewBox="0 0 16 16" fill="none"><rect x="0.7" y="0.7" width="14.6" height="14.6" fill="#fafafa" stroke="#3b3a39" stroke-width="0.9"/><rect x="0.7" y="0.7" width="7" height="7.6" fill="#83beec" stroke="#1a7fd4" stroke-width="1.1"/><rect x="0.7" y="8.3" width="7" height="7" fill="#83beec" stroke="#1a7fd4" stroke-width="1.1"/><path d="M7.7 5.6H15.3M11.4 5.6V15.3M11.4 9.4H15.3M11.4 12.2H15.3" stroke="#3b3a39" stroke-width="0.9"/></svg>
<svg style="left:1297.2px;top:277.2px;overflow:visible;" width="16" height="16" viewBox="0 0 16 16" fill="none"><circle cx="8.6" cy="6.8" r="5.4" fill="#fafafa" stroke="#3b3a39" stroke-width="1.1"/><path d="M6.6 2.4Q9 2 10.6 3.2L9.4 5.2L7.2 5.6L5.6 4.2ZM8.6 7.4L11.4 7L12.6 8.8L10.6 11.2L8.4 10Z M4.6 6.6L6.2 7.6L5.6 9.4L4 8.2Z" fill="#2f9e4f"/><path d="M4.4 1.6A7 7 0 0 0 5 12.6" stroke="#9a9896" stroke-width="1.1"/><path d="M8.6 12.2V14.6M3.6 14.8H13.6" stroke="#3b3a39" stroke-width="1.1"/></svg>
<svg style="left:1321.7px;top:277.2px;overflow:visible;" width="16" height="16" viewBox="0 0 16 16" fill="none"><path d="M0.8 6.2L1.6 9.6L4.6 12.8L7.6 13.2L8.6 15L10.6 13.2L14.6 10.4L15.4 6.2L15 1.8L11 3.2L8.6 2.2V6.6L4.8 7.6L3 6.6Z" fill="#c8c6c4" stroke="#9a9896" stroke-width="0.8"/><path d="M1.6 1.2L6.8 1.6L7 6L4.6 7.4L1.4 6.4Z" fill="#83beec" stroke="#1a7fd4" stroke-width="1"/><path d="M9.6 8.6L15 7.4L14.6 10.6L10.2 13.4L8.8 12.4Z" fill="#83beec" stroke="#1a7fd4" stroke-width="1"/></svg>
<svg style="left:1346.2px;top:277.2px;overflow:visible;" width="16" height="16" viewBox="0 0 16 16" fill="none"><path d="M1.4 11.6A6.9 6.9 0 0 1 8.4 4.2" stroke="#3b3a39" stroke-width="3.6"/><path d="M1.4 11.6A6.9 6.9 0 0 1 8.4 4.2" stroke="#fafafa" stroke-width="1.8"/><path d="M8.4 4.2A6.9 6.9 0 0 1 15 11.6" stroke="#1a7fd4" stroke-width="3.6"/><path d="M8.4 4.2A6.9 6.9 0 0 1 15 11.6" stroke="#83beec" stroke-width="1.8"/><path d="M6.6 11.4L11.4 6.6" stroke="#3b3a39" stroke-width="1.5"/></svg>
<svg style="left:1370.7px;top:277.2px;overflow:visible;" width="16" height="16" viewBox="0 0 16 16" fill="none"><rect x="0.7" y="2.4" width="14.8" height="11.4" fill="#fafafa" stroke="#3b3a39" stroke-width="0.9"/><path d="M0.7 12.6H15.5" stroke="#c8c6c4" stroke-width="2"/><text x="8.1" y="10.4" font-family="Liberation Sans,sans-serif" font-size="7.6" fill="#1a7fd4" text-anchor="middle" letter-spacing="-0.3">123</text></svg>
<svg style="left:1395.2px;top:277.2px;overflow:visible;" width="16" height="16" viewBox="0 0 16 16" fill="none"><rect x="0.7" y="0.7" width="14.8" height="14.8" fill="#fafafa" stroke="#9a9896" stroke-width="0.7"/><rect x="1.7" y="1.7" width="12.8" height="12.8" fill="#fafafa" stroke="#3b3a39" stroke-width="0.7"/><path d="M4.8 5H11.8M4.8 10H11.8" stroke="#1a7fd4" stroke-width="1.7"/><path d="M4.8 7.2H8.4M4.8 12.2H8.4" stroke="#9a9896" stroke-width="0.9"/><path d="M3.4 3.6V12.6" stroke="#9a9896" stroke-width="0.7"/></svg>
<svg style="left:1419.7px;top:277.2px;overflow:visible;" width="16" height="16" viewBox="0 0 16 16" fill="none"><rect x="0.7" y="2.2" width="14.8" height="11.8" fill="#fafafa" stroke="#3b3a39" stroke-width="0.9"/><path d="M2.6 8.8L5.4 4.2L8.2 8.8Z" fill="#3aa35a"/><path d="M8.8 4.4H14.2L11.5 9Z" fill="#d13438"/><path d="M2.6 11.4H13.6" stroke="#9a9896" stroke-width="0.9"/></svg>
<svg style="left:1297.2px;top:301.6px;overflow:visible;" width="16" height="16" viewBox="0 0 16 16" fill="none"><rect x="0.8" y="1.2" width="14.4" height="13.6" fill="#fafafa" stroke="#3b3a39" stroke-width="1.1"/><path d="M0.8 3.6H15.2" stroke="#3b3a39" stroke-width="1"/><rect x="3" y="6" width="2.6" height="2.4" fill="#fafafa" stroke="#9a9896" stroke-width="0.9"/><rect x="3" y="10.2" width="2.6" height="2.4" fill="#fafafa" stroke="#9a9896" stroke-width="0.9"/><path d="M8 8.4H16.4L13.4 11.8V15.8H11V11.8Z" fill="#fafafa" stroke="#3b3a39" stroke-width="1" stroke-linejoin="round"/></svg>
<svg style="left:1321.7px;top:301.6px;overflow:visible;" width="16" height="16" viewBox="0 0 16 16" fill="none"><rect x="0.8" y="1" width="14.6" height="14" fill="#fafafa" stroke="#3b3a39" stroke-width="1"/><path d="M0.8 2.8H15.4" stroke="#3b3a39" stroke-width="0.9"/><path d="M0.8 6.8H15.4M0.8 10.8H15.4M5.6 3V15M10.4 3V15" stroke="#3b3a39" stroke-width="0.9"/></svg>
<svg style="left:1346.2px;top:301.6px;overflow:visible;" width="16" height="16" viewBox="0 0 16 16" fill="none"><rect x="0.8" y="1" width="14.6" height="14" fill="#fafafa"/><rect x="10.4" y="2.8" width="5" height="12.2" fill="#83beec"/><rect x="0.8" y="10.8" width="14.6" height="4.2" fill="#83beec"/><path d="M0.8 6.8H10.4M0.8 10.8H10.4M5.6 2.8V10.8M10.4 2.8V10.8" stroke="#3b3a39" stroke-width="0.8"/><path d="M10.4 6.8H15.4M5.6 10.8V15M10.4 10.8V15M10.4 10.8H15.4" stroke="#fafafa" stroke-width="0.8"/><path d="M0.8 2.6H15.4" stroke="#3b3a39" stroke-width="0.9"/><rect x="0.8" y="1" width="14.6" height="14" fill="none" stroke="#3b3a39" stroke-width="1"/></svg>
<svg style="left:1370.7px;top:301.6px;overflow:visible;" width="16" height="16" viewBox="0 0 16 16" fill="none"><text x="7.4" y="13" font-family="Liberation Sans,sans-serif" font-size="14" font-weight="700" fill="#1a7fd4" text-anchor="middle">R</text></svg>
<svg style="left:1395.2px;top:301.6px;overflow:visible;" width="16" height="16" viewBox="0 0 16 16" fill="none"><text x="7" y="11" font-family="Liberation Sans,sans-serif" font-size="14" font-weight="700" fill="#1a7fd4" text-anchor="middle" letter-spacing="-0.4">Py</text></svg>
<svg style="left:1419.7px;top:301.6px;overflow:visible;" width="16" height="16" viewBox="0 0 16 16" fill="none"><path d="M0.8 0.5V15.3H16" stroke="#3b3a39" stroke-width="1.1"/><path d="M1.4 3.6H11.6" stroke="#83beec" stroke-width="1.2"/><circle cx="13.2" cy="3.6" r="1.8" fill="#fafafa" stroke="#1a7fd4" stroke-width="1.1"/><path d="M1.4 7.8H9" stroke="#9a9896" stroke-width="0.9"/><circle cx="9.6" cy="7.8" r="1.1" fill="#9a9896"/><path d="M1.4 11.4H5.4" stroke="#9a9896" stroke-width="0.9"/><circle cx="6" cy="11.4" r="1" fill="#9a9896"/></svg>
<svg style="left:1297.2px;top:326.0px;overflow:visible;" width="16" height="16" viewBox="0 0 16 16" fill="none"><rect x="0.8" y="6.4" width="5.2" height="3.2" fill="#83beec" stroke="#1a7fd4" stroke-width="1"/><rect x="10.4" y="0.8" width="5" height="3.2" fill="#83beec" stroke="#1a7fd4" stroke-width="1"/><rect x="10.4" y="6.4" width="5" height="3.2" fill="#83beec" stroke="#1a7fd4" stroke-width="1"/><rect x="10.4" y="12" width="5" height="3.2" fill="#83beec" stroke="#1a7fd4" stroke-width="1"/><path d="M6 8H10.4M8.2 2.4H10.4M8.2 13.6H10.4M8.2 2.4V13.6" stroke="#1a7fd4" stroke-width="1"/></svg>
<svg style="left:1321.7px;top:326.0px;overflow:visible;" width="16" height="16" viewBox="0 0 16 16" fill="none"><path d="M0.8 1.6H15.2V11.6H6L3.4 14.6V11.6H0.8Z" fill="#fafafa" stroke="#1a7fd4" stroke-width="1.1" stroke-linejoin="round"/></svg>
<svg style="left:1346.2px;top:326.0px;overflow:visible;" width="16" height="16" viewBox="0 0 16 16" fill="none"><path d="M2.4 0.8H10.4L14.6 5V15.2H2.4Z" fill="#fafafa" stroke="#3b3a39" stroke-width="1" stroke-linejoin="round"/><path d="M10.4 0.8V5H14.6" stroke="#3b3a39" stroke-width="0.9"/><rect x="1" y="5.6" width="2.6" height="2.4" fill="#83beec" stroke="#1a7fd4" stroke-width="1"/><path d="M5.2 7.6H11.6M5.2 10.6H9.6" stroke="#1a7fd4" stroke-width="1"/></svg>
<svg style="left:1370.7px;top:326.0px;overflow:visible;" width="16" height="16" viewBox="0 0 16 16" fill="none"><path d="M3.6 2.4H12.4V6.4Q12.4 10.6 8 10.6Q3.6 10.6 3.6 6.4Z" fill="#fafafa" stroke="#3b3a39" stroke-width="1.1"/><path d="M3.6 3.6H1V5.6Q1 8 4.2 8.4M12.4 3.6H15V5.6Q15 8 11.8 8.4" stroke="#3b3a39" stroke-width="1"/><path d="M6.6 10.4L5.6 13.4H10.4L9.4 10.4Z" fill="#fafafa" stroke="#3b3a39" stroke-width="1"/><path d="M4 1.4H12" stroke="#1a7fd4" stroke-width="1.8" stroke-linecap="round"/><path d="M4.2 14.6H11.8" stroke="#1a7fd4" stroke-width="1.8" stroke-linecap="round"/></svg>
<svg style="left:1395.2px;top:326.0px;overflow:visible;" width="16" height="16" viewBox="0 0 16 16" fill="none"><path d="M2 0.8H10L14.2 5V15.4H2Z" fill="#fafafa" stroke="#3b3a39" stroke-width="1.2" stroke-linejoin="round"/><path d="M10 0.8V5H14.2" stroke="#3b3a39" stroke-width="1"/><path d="M4.8 13.6V10.4M8 13.6V11.6M11.2 13.6V8" stroke="#252423" stroke-width="1.7"/></svg>
<svg style="left:1419.7px;top:326.0px;overflow:visible;" width="16" height="16" viewBox="0 0 16 16" fill="none"><rect x="1" y="1.6" width="13.8" height="13.6" fill="#fafafa" stroke="#1a7fd4" stroke-width="1.2"/><path d="M6.2 15V11.6L8.6 9.6V6.4L10.8 4.4H14.8V7.2L12.2 8V11.4L10.4 15Z" fill="#83beec" stroke="#1a7fd4" stroke-width="0.9"/><path d="M0.6 0.6H4.2V5.6L2.4 8.2L0.6 5.6Z" fill="#e07a16"/><rect x="1.8" y="2.4" width="1.2" height="1.6" fill="#fff"/><circle cx="13.4" cy="13.6" r="2.1" fill="#e07a16"/><circle cx="15.2" cy="9.6" r="1.2" fill="#e07a16"/></svg>
<svg style="left:1297.2px;top:350.4px;overflow:visible;" width="16" height="16" viewBox="0 0 16 16" fill="none"><path d="M0.8 8L6 1.6Q8 -0.2 10 1.6L15.2 8L10 14.4Q8 16.2 6 14.4Z" stroke="#9b3fb5" stroke-width="1.1"/><path d="M4 4.2L8 8L4 11.8M12 4.2L8 8L12 11.8M5.6 1.8L10.6 7.6M5.6 14.2L10.6 8.4" stroke="#9b3fb5" stroke-width="1" opacity="0.85"/></svg>
<svg style="left:1321.7px;top:350.4px;overflow:visible;" width="16" height="16" viewBox="0 0 16 16" fill="none"><path d="M0.8 1.6H10L15.4 8L10 14.4H0.8L6.2 8Z" fill="#fafafa" stroke="#1a7fd4" stroke-width="1.1" stroke-linejoin="round"/><path d="M3.2 14L11.6 4.2M6.6 14L13.6 6.2" stroke="#1a7fd4" stroke-width="1"/></svg>
<svg style="left:1346.2px;top:350.4px;overflow:visible;" width="16" height="16" viewBox="0 0 16 16" fill="none"><rect x="1.6" y="7.2" width="1.7" height="1.7" fill="#8a5a2b"/><rect x="7.2" y="7.2" width="1.7" height="1.7" fill="#8a5a2b"/><rect x="12.8" y="7.2" width="1.7" height="1.7" fill="#8a5a2b"/></svg>
<svg style="left:1297px;top:157px;" width="24" height="24" viewBox="0 0 24 24" fill="none"><path d="M1.4 1.8H18" stroke="#3b3a39" stroke-width="1.1"/><rect x="1.6" y="6" width="20.6" height="6.6" fill="#117865" stroke="#1f1f1f" stroke-width="1" stroke-dasharray="1.6 1"/><rect x="1.6" y="15.2" width="20.6" height="6.8" fill="#117865" stroke="#1f1f1f" stroke-width="1" stroke-dasharray="1.6 1"/></svg>
<svg style="left:1357px;top:158px;" width="22" height="23" viewBox="0 0 22 23" fill="none"><path d="M1.6 17.6V9.4H6.4M6.4 17V1.6H11.8V12M11.8 6.2H17.2V8" stroke="#3b3a39" stroke-width="1.1"/><path d="M19.8 8Q17 10 11.4 17.4L13.2 18.8Q19 11.6 19.8 8Z" stroke="#3b3a39" stroke-width="0.9" fill="#f3f2f1"/><path d="M10.8 17.6Q8.4 17.6 8 19.6Q7 20.6 4.4 20.6Q8.6 22.6 11.4 21.2Q13.2 20 12.8 18.8Z" stroke="#3b3a39" stroke-width="0.9" fill="#f3f2f1"/></svg>
<svg style="left:1412px;top:157px;" width="25" height="24" viewBox="0 0 25 24" fill="none"><circle cx="10.8" cy="10" r="8.6" stroke="#3b3a39" stroke-width="1.1" fill="#f3f2f1"/><path d="M2.6 8.4L5.6 7L8.6 9.4L16.6 4" stroke="#3b3a39" stroke-width="1.1"/><path d="M5.4 11.6V16.6M8.6 13.6V18.2M11.8 11.6V18.4M15 9.6V17" stroke="#3b3a39" stroke-width="1"/><path d="M16.8 16.2L22.6 22" stroke="#201f1e" stroke-width="1.9" stroke-linecap="round"/></svg>
<span style="left:1298.50px;top:384.28px;font-size:11px;color:#3b3a39;letter-spacing:-0.510px;">X-axis</span>
<svg style="left:1290.8px;top:401px;" width="150" height="50.5" viewBox="0 0 150 50.5" fill="none"><rect x="1" y="1" width="147.6" height="48.5" rx="1.5" fill="#fff" stroke="#c9c7c5" stroke-width="1.1" stroke-dasharray="2 1.6"/></svg>
<div style="left:1294px;top:405px;width:143.5px;height:35.7px;background:#edebe9;border:1px solid #c8c6c4;box-sizing:border-box;border-radius:1px;"></div>
<span style="left:1298.70px;top:409.38px;font-size:11px;color:#3b3a39;letter-spacing:-0.318px;">OrderDate</span>
<svg style="left:1410.9px;top:412.7px;" width="9" height="5.5" viewBox="0 0 9 5.5" fill="none"><path d="M0.5 0.5L4.5 4.7L8.5 0.5" stroke="#484644" stroke-width="0.9"/></svg>
<svg style="left:1426.1px;top:411.7px;" width="7" height="7" viewBox="0 0 7 7" fill="none"><path d="M0.5 0.5L6.5 6.5M6.5 0.5L0.5 6.5" stroke="#484644" stroke-width="0.9"/></svg>
<span style="left:1305.80px;top:426.98px;font-size:11px;color:#3b3a39;letter-spacing:-0.016px;">Month</span>
<svg style="left:1426.1px;top:429.5px;" width="7" height="7" viewBox="0 0 7 7" fill="none"><path d="M0.5 0.5L6.5 6.5M6.5 0.5L0.5 6.5" stroke="#484644" stroke-width="0.9"/></svg>
<span style="left:1298.50px;top:460.58px;font-size:11px;color:#3b3a39;letter-spacing:-0.344px;">Y-axis</span>
<svg style="left:1290.8px;top:478.3px;" width="150" height="32.2" viewBox="0 0 150 32.2" fill="none"><rect x="1" y="1" width="147.6" height="30.2" rx="1.5" fill="#fff" stroke="#c9c7c5" stroke-width="1.1" stroke-dasharray="2 1.6"/></svg>
<div style="left:1294px;top:482.6px;width:143.5px;height:19px;background:#edebe9;border:1px solid #c8c6c4;box-sizing:border-box;border-radius:1px;"></div>
<span style="left:1298.70px;top:486.78px;font-size:11px;color:#3b3a39;letter-spacing:-0.394px;">Sum of TotalRevenue</span>
<svg style="left:1410.9px;top:490.1px;" width="9" height="5.5" viewBox="0 0 9 5.5" fill="none"><path d="M0.5 0.5L4.5 4.7L8.5 0.5" stroke="#484644" stroke-width="0.9"/></svg>
<svg style="left:1426.1px;top:489.1px;" width="7" height="7" viewBox="0 0 7 7" fill="none"><path d="M0.5 0.5L6.5 6.5M6.5 0.5L0.5 6.5" stroke="#484644" stroke-width="0.9"/></svg>
<span style="left:1298.50px;top:521.18px;font-size:11px;color:#3b3a39;letter-spacing:-0.453px;">Legend</span>
<svg style="left:1290.8px;top:537.8px;" width="150" height="26.2" viewBox="0 0 150 26.2" fill="none"><rect x="1" y="1" width="147.6" height="24.2" rx="1.5" fill="#fff" stroke="#c9c7c5" stroke-width="1.1" stroke-dasharray="2 1.6"/></svg>
<span style="left:1301.30px;top:545.88px;font-size:11px;color:#3b3a39;letter-spacing:-0.243px;">Add data fields here</span>
<span style="left:1298.50px;top:573.78px;font-size:11px;color:#3b3a39;letter-spacing:-0.231px;">Small multiples</span>
<svg style="left:1290.8px;top:590.5px;" width="150" height="25.6" viewBox="0 0 150 25.6" fill="none"><rect x="1" y="1" width="147.6" height="23.6" rx="1.5" fill="#fff" stroke="#c9c7c5" stroke-width="1.1" stroke-dasharray="2 1.6"/></svg>
<span style="left:1301.30px;top:598.18px;font-size:11px;color:#3b3a39;letter-spacing:-0.243px;">Add data fields here</span>
<span style="left:1298.50px;top:626.38px;font-size:11px;color:#3b3a39;letter-spacing:-0.100px;">Tooltips</span>
<svg style="left:1290.8px;top:643px;" width="150" height="26.3" viewBox="0 0 150 26.3" fill="none"><rect x="1" y="1" width="147.6" height="24.3" rx="1.5" fill="#fff" stroke="#c9c7c5" stroke-width="1.1" stroke-dasharray="2 1.6"/></svg>
<span style="left:1301.30px;top:650.98px;font-size:11px;color:#3b3a39;letter-spacing:-0.243px;">Add data fields here</span>
<span style="left:1298.50px;top:678.98px;font-size:11px;color:#252423;-webkit-text-stroke:0.3px;letter-spacing:0.130px;">Drill through</span>
<span style="left:1298.50px;top:700.98px;font-size:11px;color:#3b3a39;letter-spacing:-0.302px;">Cross-report</span>
<div style="left:1412px;top:701px;width:28px;height:12.6px;background:#fff;border:1px solid #605e5c;box-sizing:border-box;border-radius:7px;"></div>
<div style="left:1415.5px;top:703.8px;width:7px;height:7px;background:#605e5c;border-radius:4px;"></div>
<span style="left:1424.50px;top:702.38px;font-size:9px;color:#605e5c;letter-spacing:0.052px;">Off</span>
<span style="left:1298.50px;top:724.28px;font-size:11px;color:#3b3a39;letter-spacing:-0.256px;">Keep all filters</span>
<div style="left:1412px;top:724px;width:28px;height:13.4px;background:#484644;border-radius:7px;"></div>
<div style="left:1429px;top:726.8px;width:7.6px;height:7.6px;background:#fff;border-radius:4px;"></div>
<span style="left:1416.30px;top:725.88px;font-size:9px;color:#fff;letter-spacing:-0.758px;">On</span>
<svg style="left:1290.8px;top:745.4px;" width="150" height="24.1" viewBox="0 0 150 24.1" fill="none"><rect x="1" y="1" width="147.6" height="22.1" rx="1.5" fill="#fff" stroke="#c9c7c5" stroke-width="1.1" stroke-dasharray="2 1.6"/></svg>
<span style="left:1299.50px;top:752.78px;font-size:11px;color:#3b3a39;letter-spacing:-0.105px;">Add drill-through fields here</span>
<div style="left:1447px;top:106px;width:233px;height:685px;background:#f3f2f1;"></div>
<div style="left:1445px;top:106.6px;width:2px;height:685px;background:#eceae8;"></div>
<span style="left:1453.80px;top:114.84px;font-size:14px;color:#252423;-webkit-text-stroke:0.45px;letter-spacing:-0.020px;">Data</span>
<svg style="left:1661.5px;top:115.9px;" width="12" height="12.6" viewBox="0 0 12 12.6" fill="none"><path d="M0.9 0.7L5.8 6.3L0.9 11.9M5.7 0.7L10.6 6.3L5.7 11.9" stroke="#323130" stroke-width="1.1"/></svg>
<div style="left:1450.3px;top:144.5px;width:225.8px;height:23.2px;background:#fff;border:1px solid #918f8d;box-sizing:border-box;border-radius:2px;"></div>
<svg style="left:1457px;top:150.5px;" width="12" height="12" viewBox="0 0 12 12" fill="none"><circle cx="7.3" cy="4.7" r="3.9" stroke="#605e5c" stroke-width="1"/><path d="M4.6 7.5L0.8 11.3" stroke="#605e5c" stroke-width="1.1"/></svg>
<span style="left:1475.50px;top:150.44px;font-size:12px;color:#605e5c;letter-spacing:-0.339px;">Search</span>
<svg style="left:1453px;top:184.7px;" width="9" height="6" viewBox="0 0 9 6" fill="none"><path d="M0.5 0.7L4.5 4.9L8.5 0.7" stroke="#605e5c" stroke-width="0.9"/></svg>
<svg style="left:1466.3px;top:180.7px;" width="11" height="11" viewBox="0 0 11 11" fill="none"><rect x="0.5" y="0.5" width="10" height="10" stroke="#323130"/><path d="M0.5 1.5H10.5" stroke="#323130" stroke-width="2"/><path d="M0.5 5H10.5M0.5 7.8H10.5M4 2.5V10.5M7.3 2.5V10.5" stroke="#323130" stroke-width="0.9"/></svg>
<svg style="left:1472.4px;top:186.8px;" width="9.2" height="9.2" viewBox="0 0 9.2 9.2" fill="none"><circle cx="4.6" cy="4.6" r="4.6" fill="#117865"/><path d="M2.5 4.7L4 6.2L6.7 3.2" stroke="#fff" stroke-width="1"/></svg>
<span style="left:1482.70px;top:181.18px;font-size:11px;color:#3b3a39;letter-spacing:-0.579px;">Sample_data1</span>
<div style="left:1479.5px;top:202.70000000000002px;width:10.4px;height:10.4px;background:#fff;border:1px solid #a3a19f;box-sizing:border-box;border-radius:2px;"></div>
<svg style="left:1497.3px;top:202.9px;" width="9" height="10.5" viewBox="0 0 9 10.5" fill="none"><path d="M8 1.6V0.6H0.9L5 5.2L0.9 9.9H8V8.8" stroke="#484644" stroke-width="0.95" stroke-linejoin="miter"/></svg>
<span style="left:1513.00px;top:201.88px;font-size:11px;color:#3b3a39;letter-spacing:-0.369px;">CustomerID</span>
<svg style="left:1466.3px;top:226.4px;" width="9" height="6" viewBox="0 0 9 6" fill="none"><path d="M0.5 0.7L4.5 4.9L8.5 0.7" stroke="#605e5c" stroke-width="0.9"/></svg>
<div style="left:1479.5px;top:223.70000000000002px;width:10.4px;height:10.4px;background:#117865;border-radius:1.5px;"></div>
<svg style="left:1481.1px;top:226.1px;" width="7.5" height="6" viewBox="0 0 7.5 6" fill="none"><path d="M0.7 3L2.8 5L6.8 0.8" stroke="#fff" stroke-width="1.2"/></svg>
<svg style="left:1495px;top:221.9px;" width="14" height="13.5" viewBox="0 0 14 13.5" fill="none"><rect x="0.5" y="1.5" width="13" height="11.5" stroke="#484644"/><path d="M0.5 4.5H13.5M3.5 0V2.5M7 0V2.5M10.5 0V2.5" stroke="#484644"/><path d="M2.5 7H11.5M2.5 9H11.5M2.5 11H11.5" stroke="#484644" stroke-width="1.1" stroke-dasharray="1.2 1.3"/></svg>
<svg style="left:1502.8px;top:229.3px;" width="9.2" height="9.2" viewBox="0 0 9.2 9.2" fill="none"><circle cx="4.6" cy="4.6" r="4.6" fill="#117865"/><path d="M2.5 4.7L4 6.2L6.7 3.2" stroke="#fff" stroke-width="1"/></svg>
<span style="left:1513.00px;top:222.88px;font-size:11px;color:#3b3a39;letter-spacing:-0.318px;">OrderDate</span>
<svg style="left:1479.5px;top:247.4px;" width="9" height="6" viewBox="0 0 9 6" fill="none"><path d="M0.5 0.7L4.5 4.9L8.5 0.7" stroke="#605e5c" stroke-width="0.9"/></svg>
<div style="left:1492.6px;top:244.70000000000002px;width:10.4px;height:10.4px;background:#117865;border-radius:1.5px;"></div>
<svg style="left:1494.1999999999998px;top:247.1px;" width="7.5" height="6" viewBox="0 0 7.5 6" fill="none"><path d="M0.7 3L2.8 5L6.8 0.8" stroke="#fff" stroke-width="1.2"/></svg>
<svg style="left:1510.5px;top:242.4px;" width="9" height="13" viewBox="0 0 9 13" fill="none"><rect x="0.5" y="0.5" width="3" height="2.6" stroke="#484644" stroke-width="0.9"/><path d="M2 3.2V10.6H5M2 6.4H5" stroke="#484644" stroke-width="0.9"/><rect x="5" y="5" width="3.4" height="2.6" stroke="#484644" stroke-width="0.9"/><rect x="5" y="9.3" width="3.4" height="2.6" stroke="#484644" stroke-width="0.9"/></svg>
<svg style="left:1516.0px;top:250.0px;" width="9.2" height="9.2" viewBox="0 0 9.2 9.2" fill="none"><circle cx="4.6" cy="4.6" r="4.6" fill="#117865"/><path d="M2.5 4.7L4 6.2L6.7 3.2" stroke="#fff" stroke-width="1"/></svg>
<span style="left:1526.50px;top:243.88px;font-size:11px;color:#3b3a39;letter-spacing:-0.347px;">Date Hierarchy</span>
<div style="left:1505.8px;top:265.8px;width:10.4px;height:10.4px;background:#fff;border:1px solid #a3a19f;box-sizing:border-box;border-radius:2px;"></div>
<span style="left:1539.30px;top:264.98px;font-size:11px;color:#3b3a39;letter-spacing:-0.684px;">Year</span>
<div style="left:1505.8px;top:286.8px;width:10.4px;height:10.4px;background:#fff;border:1px solid #a3a19f;box-sizing:border-box;border-radius:2px;"></div>
<span style="left:1539.30px;top:285.98px;font-size:11px;color:#3b3a39;letter-spacing:-0.185px;">Quarter</span>
<div style="left:1505.8px;top:307.8px;width:10.4px;height:10.4px;background:#117865;border-radius:1.5px;"></div>
<svg style="left:1507.3999999999999px;top:310.2px;" width="7.5" height="6" viewBox="0 0 7.5 6" fill="none"><path d="M0.7 3L2.8 5L6.8 0.8" stroke="#fff" stroke-width="1.2"/></svg>
<span style="left:1539.30px;top:306.98px;font-size:11px;color:#3b3a39;letter-spacing:0.084px;">Month</span>
<div style="left:1505.8px;top:328.8px;width:10.4px;height:10.4px;background:#fff;border:1px solid #a3a19f;box-sizing:border-box;border-radius:2px;"></div>
<span style="left:1539.30px;top:327.98px;font-size:11px;color:#3b3a39;letter-spacing:-0.521px;">Day</span>
<div style="left:1479.5px;top:349.7px;width:10.4px;height:10.4px;background:#fff;border:1px solid #a3a19f;box-sizing:border-box;border-radius:2px;"></div>
<svg style="left:1497.3px;top:349.9px;" width="9" height="10.5" viewBox="0 0 9 10.5" fill="none"><path d="M8 1.6V0.6H0.9L5 5.2L0.9 9.9H8V8.8" stroke="#484644" stroke-width="0.95" stroke-linejoin="miter"/></svg>
<span style="left:1513.00px;top:348.88px;font-size:11px;color:#3b3a39;letter-spacing:-0.304px;">OrderID</span>
<div style="left:1479.5px;top:370.7px;width:10.4px;height:10.4px;background:#fff;border:1px solid #a3a19f;box-sizing:border-box;border-radius:2px;"></div>
<svg style="left:1497.3px;top:370.9px;" width="9" height="10.5" viewBox="0 0 9 10.5" fill="none"><path d="M8 1.6V0.6H0.9L5 5.2L0.9 9.9H8V8.8" stroke="#484644" stroke-width="0.95" stroke-linejoin="miter"/></svg>
<span style="left:1513.00px;top:369.88px;font-size:11px;color:#3b3a39;letter-spacing:-0.269px;">ProductID</span>
<div style="left:1479.5px;top:391.7px;width:10.4px;height:10.4px;background:#fff;border:1px solid #a3a19f;box-sizing:border-box;border-radius:2px;"></div>
<svg style="left:1497.3px;top:391.9px;" width="9" height="10.5" viewBox="0 0 9 10.5" fill="none"><path d="M8 1.6V0.6H0.9L5 5.2L0.9 9.9H8V8.8" stroke="#484644" stroke-width="0.95" stroke-linejoin="miter"/></svg>
<span style="left:1513.00px;top:390.88px;font-size:11px;color:#3b3a39;letter-spacing:-0.189px;">QuantityOrdered</span>
<svg style="left:1466.3px;top:415.6px;" width="9" height="6" viewBox="0 0 9 6" fill="none"><path d="M0.5 0.7L4.5 4.9L8.5 0.7" stroke="#605e5c" stroke-width="0.9"/></svg>
<div style="left:1479.5px;top:412.90000000000003px;width:10.4px;height:10.4px;background:#fff;border:1px solid #a3a19f;box-sizing:border-box;border-radius:2px;"></div>
<svg style="left:1495px;top:411.1px;" width="14" height="13.5" viewBox="0 0 14 13.5" fill="none"><rect x="0.5" y="1.5" width="13" height="11.5" stroke="#484644"/><path d="M0.5 4.5H13.5M3.5 0V2.5M7 0V2.5M10.5 0V2.5" stroke="#484644"/><path d="M2.5 7H11.5M2.5 9H11.5M2.5 11H11.5" stroke="#484644" stroke-width="1.1" stroke-dasharray="1.2 1.3"/></svg>
<span style="left:1513.00px;top:412.08px;font-size:11px;color:#3b3a39;letter-spacing:-0.255px;">ShippingDate</span>
<svg style="left:1479.5px;top:436.6px;" width="9" height="6" viewBox="0 0 9 6" fill="none"><path d="M0.5 0.7L4.5 4.9L8.5 0.7" stroke="#605e5c" stroke-width="0.9"/></svg>
<div style="left:1492.6px;top:433.90000000000003px;width:10.4px;height:10.4px;background:#fff;border:1px solid #a3a19f;box-sizing:border-box;border-radius:2px;"></div>
<svg style="left:1510.5px;top:431.6px;" width="9" height="13" viewBox="0 0 9 13" fill="none"><rect x="0.5" y="0.5" width="3" height="2.6" stroke="#484644" stroke-width="0.9"/><path d="M2 3.2V10.6H5M2 6.4H5" stroke="#484644" stroke-width="0.9"/><rect x="5" y="5" width="3.4" height="2.6" stroke="#484644" stroke-width="0.9"/><rect x="5" y="9.3" width="3.4" height="2.6" stroke="#484644" stroke-width="0.9"/></svg>
<span style="left:1526.50px;top:433.08px;font-size:11px;color:#3b3a39;letter-spacing:-0.347px;">Date Hierarchy</span>
<div style="left:1505.8px;top:454.90000000000003px;width:10.4px;height:10.4px;background:#fff;border:1px solid #a3a19f;box-sizing:border-box;border-radius:2px;"></div>
<span style="left:1539.30px;top:454.08px;font-size:11px;color:#3b3a39;letter-spacing:-0.684px;">Year</span>
<div style="left:1505.8px;top:475.90000000000003px;width:10.4px;height:10.4px;background:#fff;border:1px solid #a3a19f;box-sizing:border-box;border-radius:2px;"></div>
<span style="left:1539.30px;top:475.08px;font-size:11px;color:#3b3a39;letter-spacing:-0.185px;">Quarter</span>
<div style="left:1505.8px;top:496.90000000000003px;width:10.4px;height:10.4px;background:#fff;border:1px solid #a3a19f;box-sizing:border-box;border-radius:2px;"></div>
<span style="left:1539.30px;top:496.08px;font-size:11px;color:#3b3a39;letter-spacing:0.084px;">Month</span>
<div style="left:1505.8px;top:517.9px;width:10.4px;height:10.4px;background:#fff;border:1px solid #a3a19f;box-sizing:border-box;border-radius:2px;"></div>
<span style="left:1539.30px;top:517.08px;font-size:11px;color:#3b3a39;letter-spacing:-0.521px;">Day</span>
<div style="left:1479.5px;top:539.0px;width:10.4px;height:10.4px;background:#117865;border-radius:1.5px;"></div>
<svg style="left:1481.1px;top:541.4000000000001px;" width="7.5" height="6" viewBox="0 0 7.5 6" fill="none"><path d="M0.7 3L2.8 5L6.8 0.8" stroke="#fff" stroke-width="1.2"/></svg>
<svg style="left:1497.3px;top:539.2px;" width="9" height="10.5" viewBox="0 0 9 10.5" fill="none"><path d="M8 1.6V0.6H0.9L5 5.2L0.9 9.9H8V8.8" stroke="#484644" stroke-width="0.95" stroke-linejoin="miter"/></svg>
<span style="left:1513.00px;top:538.18px;font-size:11px;color:#3b3a39;letter-spacing:-0.482px;">TotalRevenue</span>
<div style="left:1479.5px;top:560.0px;width:10.4px;height:10.4px;background:#fff;border:1px solid #a3a19f;box-sizing:border-box;border-radius:2px;"></div>
<svg style="left:1497.3px;top:560.2px;" width="9" height="10.5" viewBox="0 0 9 10.5" fill="none"><path d="M8 1.6V0.6H0.9L5 5.2L0.9 9.9H8V8.8" stroke="#484644" stroke-width="0.95" stroke-linejoin="miter"/></svg>
<span style="left:1513.00px;top:559.18px;font-size:11px;color:#3b3a39;letter-spacing:-0.347px;">UnitPrice</span>
<div style="left:0px;top:105px;width:1680px;height:3px;background:linear-gradient(rgba(120,116,112,0.28),rgba(120,116,112,0.10) 55%,rgba(120,116,112,0));"></div>
</body></html>
